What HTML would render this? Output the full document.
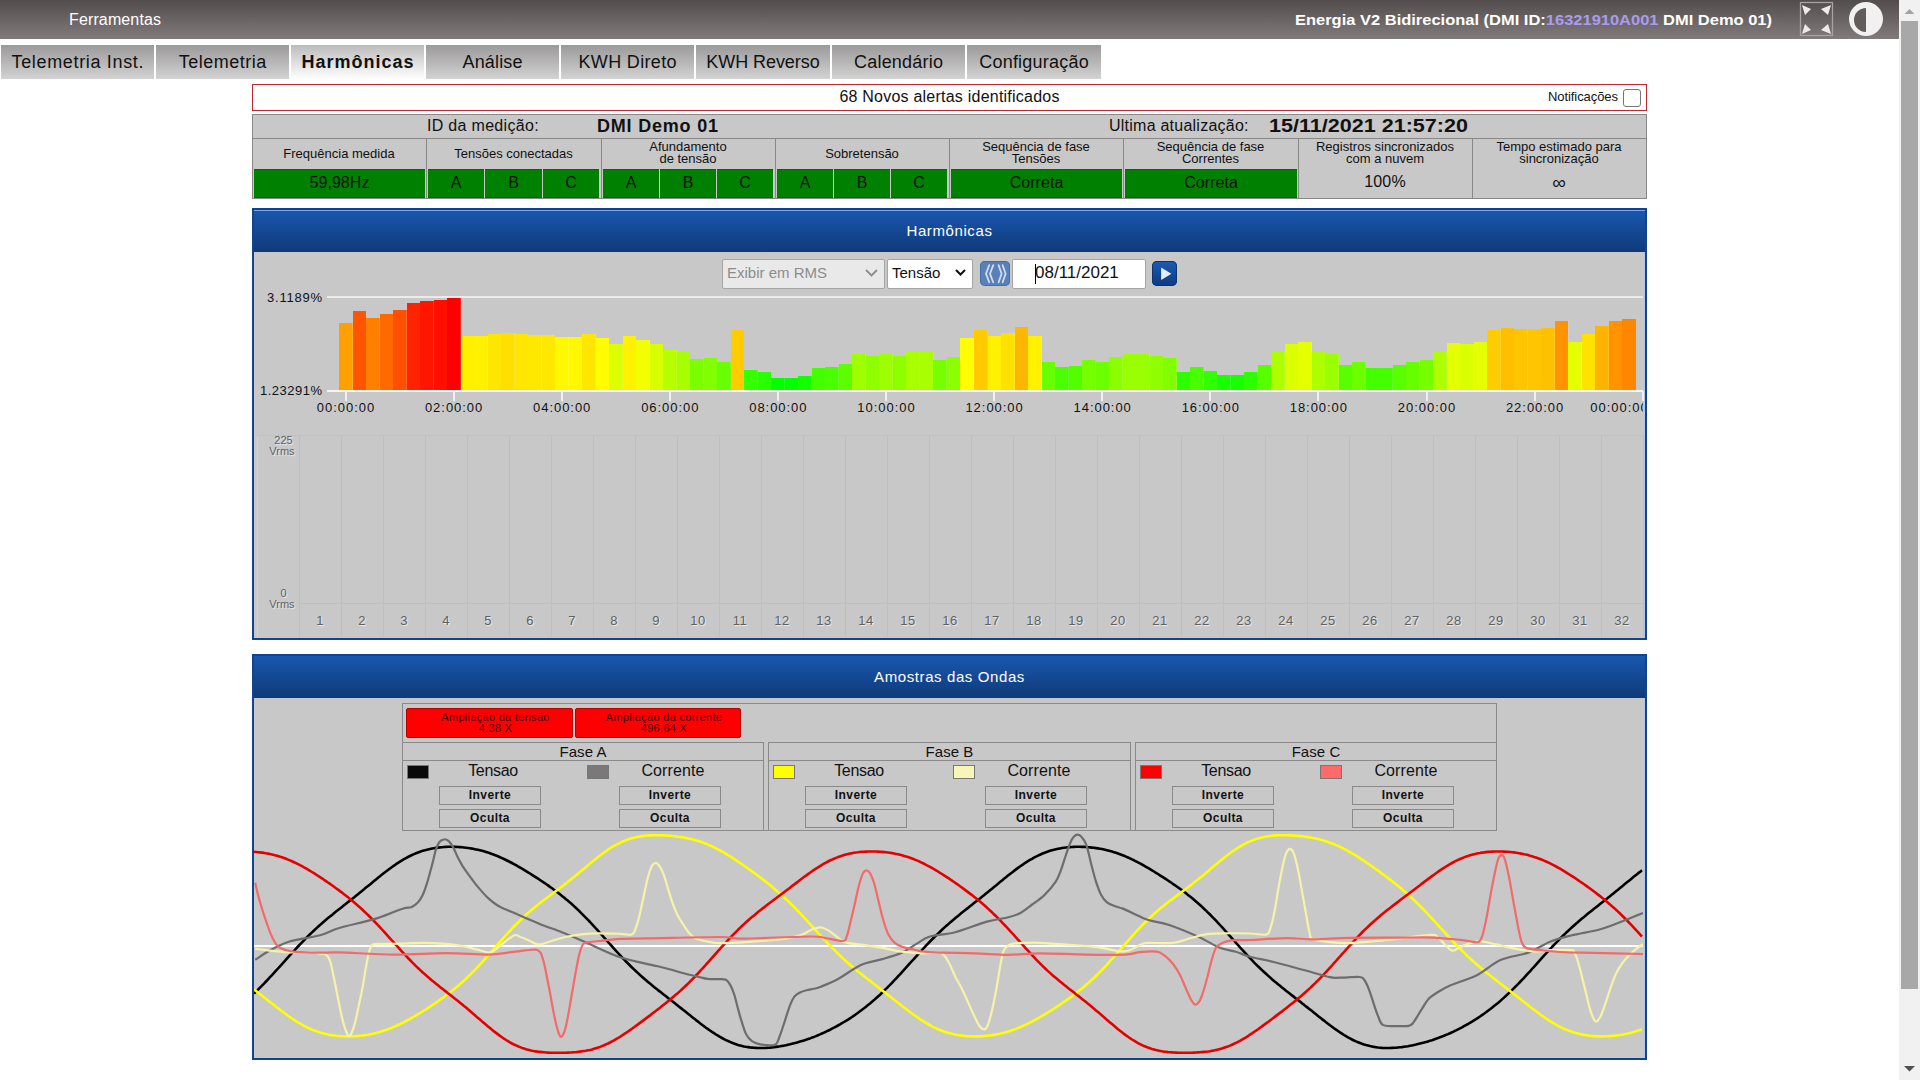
<!DOCTYPE html><html><head><meta charset='utf-8'><style>
*{box-sizing:border-box}
html,body{margin:0;padding:0;width:1920px;height:1080px;overflow:hidden;background:#fff;font-family:"Liberation Sans", sans-serif;color:#111}
.a{position:absolute;white-space:nowrap}
.hdr{left:0;top:0;width:1899px;height:39px;background:linear-gradient(#524c4c,#817c7b)}
.tab{top:45px;height:34px;background:linear-gradient(#9b9999,#d3d3d3);font-size:18px;line-height:35px;text-align:center;color:#111}
.tab.act{background:linear-gradient(#bbbbbb,#ffffff);font-weight:bold}
.cell{background:#c8c8c8;border-left:1px solid #888;text-align:center}
.g{background:#008000;text-align:center;color:#111}
.ph{background:linear-gradient(#1957b0,#0f3a78);color:#fff;text-align:center;font-size:15px}
</style></head><body>
<div class='a hdr'></div>
<div class='a' style='left:69px;top:11px;font-size:16px;color:#fff;letter-spacing:0.13px'>Ferramentas</div>
<div class='a' style='left:1295px;top:12px;font-size:14px;font-weight:bold;color:#fff;transform:scaleX(1.1767);transform-origin:0 0'>Energia V2 Bidirecional (DMI ID:<span style='color:#a99bf0'>16321910A001</span> DMI Demo 01)</div>
<svg class='a' style='left:1799px;top:1px' width='36' height='36' viewBox='0 0 36 36'>
<rect x='1.5' y='1.5' width='32' height='33' fill='none' stroke='#a8a2a0' stroke-width='1.3'/>
<path d='M3 4 L12 8 L6 14 Z M32 4 L22 8 L29 14 Z M3 33 L12 29 L6 23 Z M32 33 L22 29 L29 23 Z' fill='#eeeaea'/>
</svg>
<svg class='a' style='left:1848px;top:1px' width='36' height='36' viewBox='0 0 36 36'>
<circle cx='18' cy='18' r='17' fill='#f2f0f0'/>
<path d='M18 7 A11.5 11.5 0 0 0 18 31 Z' fill='#625c5b'/>
</svg>
<div class='a' style='left:1899px;top:0;width:21px;height:1080px;background:#f1f1f1'></div>
<div class='a' style='left:1901px;top:21px;width:17px;height:968px;background:#a8a8a8'></div>
<svg class='a' style='left:1899px;top:0' width='21' height='1080'><path d='M5.5 14 L10.5 9 L15.5 14 Z' fill='#a3a3a3'/><path d='M5 1066 L10.5 1071.5 L16 1066 Z' fill='#505050'/></svg>
<div class='a tab' style='left:1px;width:153px;letter-spacing:0.664px;text-indent:0.664px'>Telemetria Inst.</div>
<div class='a tab' style='left:156px;width:133px;letter-spacing:0.519px;text-indent:0.519px'>Telemetria</div>
<div class='a tab act' style='left:291px;width:133px;letter-spacing:0.995px;text-indent:0.995px'>Harmônicas</div>
<div class='a tab' style='left:426px;width:133px;letter-spacing:0.159px;text-indent:0.159px'>Análise</div>
<div class='a tab' style='left:561px;width:133px;letter-spacing:0.332px;text-indent:0.332px'>KWH Direto</div>
<div class='a tab' style='left:696px;width:134px;letter-spacing:-0.073px;text-indent:-0.073px'>KWH Reverso</div>
<div class='a tab' style='left:832px;width:133px;letter-spacing:0.215px;text-indent:0.215px'>Calendário</div>
<div class='a tab' style='left:967px;width:134px;letter-spacing:0.238px;text-indent:0.238px'>Configuração</div>
<div class='a' style='left:252px;top:84px;width:1395px;height:27px;border:1px solid #c0282d;background:#fff'></div>
<div class='a' style='left:252px;top:88px;width:1395px;text-align:center;font-size:16px;letter-spacing:0.226px'>68 Novos alertas identificados</div>
<div class='a' style='left:1548px;top:89px;font-size:13px;letter-spacing:-0.074px'>Notificações</div>
<div class='a' style='left:1623px;top:89px;width:18px;height:18px;border:1px solid #767676;border-radius:3px;background:#fff'></div>
<div class='a' style='left:252px;top:114px;width:1395px;height:85px;background:#c8c8c8;border:1px solid #888'></div>
<div class='a' style='left:253px;top:138px;width:1393px;height:1px;background:#888'></div>
<div class='a' style='left:427px;top:117px;font-size:16px;letter-spacing:0.307px'>ID da medição:</div>
<div class='a' style='left:597px;top:116px;font-size:18px;font-weight:bold;letter-spacing:0.797px'>DMI Demo 01</div>
<div class='a' style='left:1109px;top:117px;font-size:16px;letter-spacing:0.24px'>Ultima atualização:</div>
<div class='a' style='left:1269px;top:116px;font-size:18px;font-weight:bold;transform:scaleX(1.1977);transform-origin:0 0'>15/11/2021 21:57:20</div>
<div class='a' style='left:252px;top:146px;width:174px;text-align:center;font-size:13px;letter-spacing:0px'>Frequência medida</div>
<div class='a' style='left:426px;top:139px;width:1px;height:59px;background:#888'></div>
<div class='a' style='left:426px;top:146px;width:175px;text-align:center;font-size:13px;letter-spacing:0px'>Tensões conectadas</div>
<div class='a' style='left:601px;top:139px;width:1px;height:59px;background:#888'></div>
<div class='a' style='left:601px;top:141px;width:174px;text-align:center;font-size:13px;line-height:12px;letter-spacing:0px'>Afundamento<br>de tensão</div>
<div class='a' style='left:775px;top:139px;width:1px;height:59px;background:#888'></div>
<div class='a' style='left:775px;top:146px;width:174px;text-align:center;font-size:13px;letter-spacing:0px'>Sobretensão</div>
<div class='a' style='left:949px;top:139px;width:1px;height:59px;background:#888'></div>
<div class='a' style='left:949px;top:141px;width:174px;text-align:center;font-size:13px;line-height:12px;letter-spacing:0px'>Sequência de fase<br>Tensões</div>
<div class='a' style='left:1123px;top:139px;width:1px;height:59px;background:#888'></div>
<div class='a' style='left:1123px;top:141px;width:175px;text-align:center;font-size:13px;line-height:12px;letter-spacing:0px'>Sequência de fase<br>Correntes</div>
<div class='a' style='left:1298px;top:139px;width:1px;height:59px;background:#888'></div>
<div class='a' style='left:1298px;top:141px;width:174px;text-align:center;font-size:13px;line-height:12px;letter-spacing:0px'>Registros sincronizados<br>com a nuvem</div>
<div class='a' style='left:1472px;top:139px;width:1px;height:59px;background:#888'></div>
<div class='a' style='left:1472px;top:141px;width:174px;text-align:center;font-size:13px;line-height:12px;letter-spacing:0px'>Tempo estimado para<br>sincronização</div>
<div class='a g' style='left:254px;top:169px;width:171px;height:29px;font-size:16px;line-height:27px;letter-spacing:0.05px;box-shadow:inset 0 1px 0 #006a00,inset 0 -1px 0 #006a00'>59,98Hz</div>
<div class='a g' style='left:428px;top:169px;width:56px;height:29px;font-size:16px;line-height:27px;letter-spacing:0.05px;box-shadow:inset 0 1px 0 #006a00,inset 0 -1px 0 #006a00'>A</div>
<div class='a g' style='left:485px;top:169px;width:57px;height:29px;font-size:16px;line-height:27px;letter-spacing:0.05px;box-shadow:inset 0 1px 0 #006a00,inset 0 -1px 0 #006a00'>B</div>
<div class='a g' style='left:543px;top:169px;width:56px;height:29px;font-size:16px;line-height:27px;letter-spacing:0.05px;box-shadow:inset 0 1px 0 #006a00,inset 0 -1px 0 #006a00'>C</div>
<div class='a g' style='left:603px;top:169px;width:56px;height:29px;font-size:16px;line-height:27px;letter-spacing:0.05px;box-shadow:inset 0 1px 0 #006a00,inset 0 -1px 0 #006a00'>A</div>
<div class='a g' style='left:660px;top:169px;width:56px;height:29px;font-size:16px;line-height:27px;letter-spacing:0.05px;box-shadow:inset 0 1px 0 #006a00,inset 0 -1px 0 #006a00'>B</div>
<div class='a g' style='left:717px;top:169px;width:56px;height:29px;font-size:16px;line-height:27px;letter-spacing:0.05px;box-shadow:inset 0 1px 0 #006a00,inset 0 -1px 0 #006a00'>C</div>
<div class='a g' style='left:777px;top:169px;width:56px;height:29px;font-size:16px;line-height:27px;letter-spacing:0.05px;box-shadow:inset 0 1px 0 #006a00,inset 0 -1px 0 #006a00'>A</div>
<div class='a g' style='left:834px;top:169px;width:56px;height:29px;font-size:16px;line-height:27px;letter-spacing:0.05px;box-shadow:inset 0 1px 0 #006a00,inset 0 -1px 0 #006a00'>B</div>
<div class='a g' style='left:891px;top:169px;width:56px;height:29px;font-size:16px;line-height:27px;letter-spacing:0.05px;box-shadow:inset 0 1px 0 #006a00,inset 0 -1px 0 #006a00'>C</div>
<div class='a g' style='left:951px;top:169px;width:171px;height:29px;font-size:16px;line-height:27px;letter-spacing:0.05px;box-shadow:inset 0 1px 0 #006a00,inset 0 -1px 0 #006a00'>Correta</div>
<div class='a g' style='left:1125px;top:169px;width:172px;height:29px;font-size:16px;line-height:27px;letter-spacing:0.05px;box-shadow:inset 0 1px 0 #006a00,inset 0 -1px 0 #006a00'>Correta</div>
<div class='a' style='left:1298px;top:173px;width:174px;text-align:center;font-size:16px;letter-spacing:0.2px'>100%</div>
<div class='a' style='left:1472px;top:172px;width:174px;text-align:center;font-size:19px'>∞</div>
<div class='a' style='left:252px;top:208px;width:1395px;height:432px;background:#c8c8c8;border:2px solid #10448f'></div>
<div class='a ph' style='left:254px;top:210px;width:1391px;height:42px;line-height:42px;letter-spacing:0.6px'>Harmônicas</div>
<div class='a' style='left:1644px;top:252px;width:1px;height:386px;background:#b0c6e8'></div>
<div class='a' style='left:254px;top:210px;width:1391px;height:1px;background:#7aa6e6'></div>
<div class='a' style='left:722px;top:259px;width:163px;height:30px;background:#e9e9e9;border:1px solid #a5a5a5;border-radius:2px'></div>
<div class='a' style='left:727px;top:264px;font-size:15px;color:#8c8c8c'>Exibir em RMS</div>
<svg class='a' style='left:864px;top:268px' width='16' height='10'><path d='M2 2 L7.5 7.5 L13 2' fill='none' stroke='#8c8c8c' stroke-width='1.8'/></svg>
<div class='a' style='left:887px;top:259px;width:86px;height:30px;background:#fff;border:1px solid #a5a5a5;border-radius:2px'></div>
<div class='a' style='left:892px;top:264px;font-size:15px;color:#111'>Tensão</div>
<svg class='a' style='left:954px;top:268px' width='16' height='10'><path d='M2 2 L6.5 6.5 L11 2' fill='none' stroke='#111' stroke-width='2'/></svg>
<div class='a' style='left:980px;top:261px;width:30px;height:25px;background:#5a80b9;border-radius:5px;box-shadow:inset 0 0 0 1px #4a6ea4'></div>
<svg class='a' style='left:980px;top:261px' width='30' height='25'><path d='M9.2 4.2 L6 12.7 L9.2 21.2 M13.2 4.2 L10 12.7 L13.2 21.2 M18.6 4.2 L21.6 12.7 L18.6 21.2 M22.6 4.2 L25.6 12.7 L22.6 21.2' fill='none' stroke='#d2ddef' stroke-width='1.8' stroke-linecap='round'/></svg>
<div class='a' style='left:1012px;top:259px;width:134px;height:30px;background:#fff;border:1px solid #a5a5a5;border-radius:2px'></div>
<div class='a' style='left:1035px;top:263px;font-size:17px;color:#111'>08/11/2021</div>
<div class='a' style='left:1035px;top:264px;width:1px;height:20px;background:#000'></div>
<div class='a' style='left:1152px;top:261px;width:25px;height:25px;background:linear-gradient(#1a5cb5,#0e3a80);border-radius:5px;box-shadow:inset 0 0 0 1px #0d3470'></div>
<svg class='a' style='left:1152px;top:261px' width='25' height='25'><path d='M9.1 6.6 L19.4 12.7 L9.1 18.9 Z' fill='#e8edf6'/></svg>
<svg class='a' style='left:0;top:0' width='1920' height='1080' shape-rendering='crispEdges'><rect x='327' y='296' width='1316' height='2' fill='#ebebeb'/><rect x='339.00' y='323.1' width='13.51' height='67.9' fill='#ffa000'/><rect x='352.01' y='323.1' width='0.6' height='67.9' fill='#ffffff' fill-opacity='0.15'/><rect x='352.51' y='311.1' width='13.51' height='79.9' fill='#ff5500'/><rect x='365.52' y='311.1' width='0.6' height='79.9' fill='#ffffff' fill-opacity='0.15'/><rect x='366.02' y='317.9' width='13.51' height='73.1' fill='#ff8000'/><rect x='379.03' y='317.9' width='0.6' height='73.1' fill='#ffffff' fill-opacity='0.15'/><rect x='379.53' y='314.3' width='13.51' height='76.7' fill='#ff6900'/><rect x='392.54' y='314.3' width='0.6' height='76.7' fill='#ffffff' fill-opacity='0.15'/><rect x='393.04' y='310.1' width='13.51' height='80.9' fill='#ff4f00'/><rect x='406.05' y='310.1' width='0.6' height='80.9' fill='#ffffff' fill-opacity='0.15'/><rect x='406.55' y='303.2' width='13.51' height='87.8' fill='#ff2300'/><rect x='419.56' y='303.2' width='0.6' height='87.8' fill='#ffffff' fill-opacity='0.15'/><rect x='420.06' y='301.1' width='13.51' height='89.9' fill='#ff1600'/><rect x='433.07' y='301.1' width='0.6' height='89.9' fill='#ffffff' fill-opacity='0.15'/><rect x='433.57' y='300.0' width='13.51' height='91.0' fill='#ff0f00'/><rect x='446.58' y='300.0' width='0.6' height='91.0' fill='#ffffff' fill-opacity='0.15'/><rect x='447.08' y='297.6' width='13.51' height='93.4' fill='#ff0000'/><rect x='460.09' y='297.6' width='0.6' height='93.4' fill='#ffffff' fill-opacity='0.15'/><rect x='460.59' y='335.7' width='13.51' height='55.3' fill='#fff000'/><rect x='473.60' y='335.7' width='0.6' height='55.3' fill='#ffffff' fill-opacity='0.15'/><rect x='474.10' y='335.9' width='13.51' height='55.1' fill='#fff100'/><rect x='487.11' y='335.9' width='0.6' height='55.1' fill='#ffffff' fill-opacity='0.15'/><rect x='487.61' y='334.2' width='13.51' height='56.8' fill='#ffe600'/><rect x='500.62' y='334.2' width='0.6' height='56.8' fill='#ffffff' fill-opacity='0.15'/><rect x='501.12' y='333.0' width='13.51' height='58.0' fill='#ffdf00'/><rect x='514.14' y='333.0' width='0.6' height='58.0' fill='#ffffff' fill-opacity='0.15'/><rect x='514.64' y='334.2' width='13.51' height='56.8' fill='#ffe600'/><rect x='527.65' y='334.2' width='0.6' height='56.8' fill='#ffffff' fill-opacity='0.15'/><rect x='528.15' y='334.5' width='13.51' height='56.5' fill='#ffe800'/><rect x='541.16' y='334.5' width='0.6' height='56.5' fill='#ffffff' fill-opacity='0.15'/><rect x='541.66' y='334.5' width='13.51' height='56.5' fill='#ffe800'/><rect x='554.67' y='334.5' width='0.6' height='56.5' fill='#ffffff' fill-opacity='0.15'/><rect x='555.17' y='337.1' width='13.51' height='53.9' fill='#fff800'/><rect x='568.18' y='337.1' width='0.6' height='53.9' fill='#ffffff' fill-opacity='0.15'/><rect x='568.68' y='337.1' width='13.51' height='53.9' fill='#fff800'/><rect x='581.69' y='337.1' width='0.6' height='53.9' fill='#ffffff' fill-opacity='0.15'/><rect x='582.19' y='334.2' width='13.51' height='56.8' fill='#ffe600'/><rect x='595.20' y='334.2' width='0.6' height='56.8' fill='#ffffff' fill-opacity='0.15'/><rect x='595.70' y='337.8' width='13.51' height='53.2' fill='#fffd00'/><rect x='608.71' y='337.8' width='0.6' height='53.2' fill='#ffffff' fill-opacity='0.15'/><rect x='609.21' y='343.7' width='13.51' height='47.3' fill='#dcff00'/><rect x='622.22' y='343.7' width='0.6' height='47.3' fill='#ffffff' fill-opacity='0.15'/><rect x='622.72' y='335.9' width='13.51' height='55.1' fill='#fff100'/><rect x='635.73' y='335.9' width='0.6' height='55.1' fill='#ffffff' fill-opacity='0.15'/><rect x='636.23' y='340.1' width='13.51' height='50.9' fill='#f3ff00'/><rect x='649.24' y='340.1' width='0.6' height='50.9' fill='#ffffff' fill-opacity='0.15'/><rect x='649.74' y='344.4' width='13.51' height='46.6' fill='#d8ff00'/><rect x='662.75' y='344.4' width='0.6' height='46.6' fill='#ffffff' fill-opacity='0.15'/><rect x='663.25' y='350.1' width='13.51' height='40.9' fill='#b4ff00'/><rect x='676.26' y='350.1' width='0.6' height='40.9' fill='#ffffff' fill-opacity='0.15'/><rect x='676.76' y='352.0' width='13.51' height='39.0' fill='#a8ff00'/><rect x='689.77' y='352.0' width='0.6' height='39.0' fill='#ffffff' fill-opacity='0.15'/><rect x='690.27' y='359.2' width='13.51' height='31.8' fill='#7bff00'/><rect x='703.28' y='359.2' width='0.6' height='31.8' fill='#ffffff' fill-opacity='0.15'/><rect x='703.78' y='358.1' width='13.51' height='32.9' fill='#81ff00'/><rect x='716.79' y='358.1' width='0.6' height='32.9' fill='#ffffff' fill-opacity='0.15'/><rect x='717.29' y='362.1' width='13.51' height='28.9' fill='#68ff00'/><rect x='730.30' y='362.1' width='0.6' height='28.9' fill='#ffffff' fill-opacity='0.15'/><rect x='730.80' y='330.1' width='13.51' height='60.9' fill='#ffcc00'/><rect x='743.81' y='330.1' width='0.6' height='60.9' fill='#ffffff' fill-opacity='0.15'/><rect x='744.31' y='370.2' width='13.51' height='20.8' fill='#35ff00'/><rect x='757.32' y='370.2' width='0.6' height='20.8' fill='#ffffff' fill-opacity='0.15'/><rect x='757.82' y='372.4' width='13.51' height='18.6' fill='#28ff00'/><rect x='770.83' y='372.4' width='0.6' height='18.6' fill='#ffffff' fill-opacity='0.15'/><rect x='771.33' y='378.3' width='13.51' height='12.7' fill='#02ff00'/><rect x='784.34' y='378.3' width='0.6' height='12.7' fill='#ffffff' fill-opacity='0.15'/><rect x='784.84' y='378.2' width='13.51' height='12.8' fill='#03ff00'/><rect x='797.85' y='378.2' width='0.6' height='12.8' fill='#ffffff' fill-opacity='0.15'/><rect x='798.35' y='376.0' width='13.51' height='15.0' fill='#11ff00'/><rect x='811.36' y='376.0' width='0.6' height='15.0' fill='#ffffff' fill-opacity='0.15'/><rect x='811.86' y='368.0' width='13.51' height='23.0' fill='#43ff00'/><rect x='824.87' y='368.0' width='0.6' height='23.0' fill='#ffffff' fill-opacity='0.15'/><rect x='825.38' y='367.0' width='13.51' height='24.0' fill='#49ff00'/><rect x='838.39' y='367.0' width='0.6' height='24.0' fill='#ffffff' fill-opacity='0.15'/><rect x='838.89' y='363.9' width='13.51' height='27.1' fill='#5dff00'/><rect x='851.90' y='363.9' width='0.6' height='27.1' fill='#ffffff' fill-opacity='0.15'/><rect x='852.40' y='353.7' width='13.51' height='37.3' fill='#9dff00'/><rect x='865.41' y='353.7' width='0.6' height='37.3' fill='#ffffff' fill-opacity='0.15'/><rect x='865.91' y='355.9' width='13.51' height='35.1' fill='#8fff00'/><rect x='878.92' y='355.9' width='0.6' height='35.1' fill='#ffffff' fill-opacity='0.15'/><rect x='879.42' y='353.7' width='13.51' height='37.3' fill='#9dff00'/><rect x='892.43' y='353.7' width='0.6' height='37.3' fill='#ffffff' fill-opacity='0.15'/><rect x='892.93' y='355.9' width='13.51' height='35.1' fill='#8fff00'/><rect x='905.94' y='355.9' width='0.6' height='35.1' fill='#ffffff' fill-opacity='0.15'/><rect x='906.44' y='352.0' width='13.51' height='39.0' fill='#a8ff00'/><rect x='919.45' y='352.0' width='0.6' height='39.0' fill='#ffffff' fill-opacity='0.15'/><rect x='919.95' y='352.0' width='13.51' height='39.0' fill='#a8ff00'/><rect x='932.96' y='352.0' width='0.6' height='39.0' fill='#ffffff' fill-opacity='0.15'/><rect x='933.46' y='359.8' width='13.51' height='31.2' fill='#77ff00'/><rect x='946.47' y='359.8' width='0.6' height='31.2' fill='#ffffff' fill-opacity='0.15'/><rect x='946.97' y='356.6' width='13.51' height='34.4' fill='#8bff00'/><rect x='959.98' y='356.6' width='0.6' height='34.4' fill='#ffffff' fill-opacity='0.15'/><rect x='960.48' y='338.0' width='13.51' height='53.0' fill='#fffe00'/><rect x='973.49' y='338.0' width='0.6' height='53.0' fill='#ffffff' fill-opacity='0.15'/><rect x='973.99' y='329.9' width='13.51' height='61.1' fill='#ffcb00'/><rect x='987.00' y='329.9' width='0.6' height='61.1' fill='#ffffff' fill-opacity='0.15'/><rect x='987.50' y='335.9' width='13.51' height='55.1' fill='#fff100'/><rect x='1000.51' y='335.9' width='0.6' height='55.1' fill='#ffffff' fill-opacity='0.15'/><rect x='1001.01' y='333.3' width='13.51' height='57.7' fill='#ffe100'/><rect x='1014.02' y='333.3' width='0.6' height='57.7' fill='#ffffff' fill-opacity='0.15'/><rect x='1014.52' y='326.5' width='13.51' height='64.5' fill='#ffb600'/><rect x='1027.53' y='326.5' width='0.6' height='64.5' fill='#ffffff' fill-opacity='0.15'/><rect x='1028.03' y='335.9' width='13.51' height='55.1' fill='#fff100'/><rect x='1041.04' y='335.9' width='0.6' height='55.1' fill='#ffffff' fill-opacity='0.15'/><rect x='1041.54' y='362.1' width='13.51' height='28.9' fill='#68ff00'/><rect x='1054.55' y='362.1' width='0.6' height='28.9' fill='#ffffff' fill-opacity='0.15'/><rect x='1055.05' y='367.0' width='13.51' height='24.0' fill='#49ff00'/><rect x='1068.06' y='367.0' width='0.6' height='24.0' fill='#ffffff' fill-opacity='0.15'/><rect x='1068.56' y='365.8' width='13.51' height='25.2' fill='#51ff00'/><rect x='1081.57' y='365.8' width='0.6' height='25.2' fill='#ffffff' fill-opacity='0.15'/><rect x='1082.07' y='360.0' width='13.51' height='31.0' fill='#76ff00'/><rect x='1095.08' y='360.0' width='0.6' height='31.0' fill='#ffffff' fill-opacity='0.15'/><rect x='1095.58' y='361.5' width='13.51' height='29.5' fill='#6cff00'/><rect x='1108.59' y='361.5' width='0.6' height='29.5' fill='#ffffff' fill-opacity='0.15'/><rect x='1109.09' y='356.6' width='13.51' height='34.4' fill='#8bff00'/><rect x='1122.10' y='356.6' width='0.6' height='34.4' fill='#ffffff' fill-opacity='0.15'/><rect x='1122.60' y='354.2' width='13.51' height='36.8' fill='#9aff00'/><rect x='1135.61' y='354.2' width='0.6' height='36.8' fill='#ffffff' fill-opacity='0.15'/><rect x='1136.11' y='354.2' width='13.51' height='36.8' fill='#9aff00'/><rect x='1149.12' y='354.2' width='0.6' height='36.8' fill='#ffffff' fill-opacity='0.15'/><rect x='1149.62' y='355.9' width='13.51' height='35.1' fill='#8fff00'/><rect x='1162.64' y='355.9' width='0.6' height='35.1' fill='#ffffff' fill-opacity='0.15'/><rect x='1163.14' y='358.1' width='13.51' height='32.9' fill='#81ff00'/><rect x='1176.15' y='358.1' width='0.6' height='32.9' fill='#ffffff' fill-opacity='0.15'/><rect x='1176.65' y='371.5' width='13.51' height='19.5' fill='#2dff00'/><rect x='1189.66' y='371.5' width='0.6' height='19.5' fill='#ffffff' fill-opacity='0.15'/><rect x='1190.16' y='367.3' width='13.51' height='23.7' fill='#48ff00'/><rect x='1203.17' y='367.3' width='0.6' height='23.7' fill='#ffffff' fill-opacity='0.15'/><rect x='1203.67' y='371.2' width='13.51' height='19.8' fill='#2fff00'/><rect x='1216.68' y='371.2' width='0.6' height='19.8' fill='#ffffff' fill-opacity='0.15'/><rect x='1217.18' y='375.1' width='13.51' height='15.9' fill='#17ff00'/><rect x='1230.19' y='375.1' width='0.6' height='15.9' fill='#ffffff' fill-opacity='0.15'/><rect x='1230.69' y='375.1' width='13.51' height='15.9' fill='#17ff00'/><rect x='1243.70' y='375.1' width='0.6' height='15.9' fill='#ffffff' fill-opacity='0.15'/><rect x='1244.20' y='371.7' width='13.51' height='19.3' fill='#2cff00'/><rect x='1257.21' y='371.7' width='0.6' height='19.3' fill='#ffffff' fill-opacity='0.15'/><rect x='1257.71' y='364.7' width='13.51' height='26.3' fill='#58ff00'/><rect x='1270.72' y='364.7' width='0.6' height='26.3' fill='#ffffff' fill-opacity='0.15'/><rect x='1271.22' y='351.2' width='13.51' height='39.8' fill='#adff00'/><rect x='1284.23' y='351.2' width='0.6' height='39.8' fill='#ffffff' fill-opacity='0.15'/><rect x='1284.73' y='343.7' width='13.51' height='47.3' fill='#dcff00'/><rect x='1297.74' y='343.7' width='0.6' height='47.3' fill='#ffffff' fill-opacity='0.15'/><rect x='1298.24' y='342.3' width='13.51' height='48.7' fill='#e5ff00'/><rect x='1311.25' y='342.3' width='0.6' height='48.7' fill='#ffffff' fill-opacity='0.15'/><rect x='1311.75' y='351.1' width='13.51' height='39.9' fill='#adff00'/><rect x='1324.76' y='351.1' width='0.6' height='39.9' fill='#ffffff' fill-opacity='0.15'/><rect x='1325.26' y='354.2' width='13.51' height='36.8' fill='#9aff00'/><rect x='1338.27' y='354.2' width='0.6' height='36.8' fill='#ffffff' fill-opacity='0.15'/><rect x='1338.77' y='364.7' width='13.51' height='26.3' fill='#58ff00'/><rect x='1351.78' y='364.7' width='0.6' height='26.3' fill='#ffffff' fill-opacity='0.15'/><rect x='1352.28' y='361.5' width='13.51' height='29.5' fill='#6cff00'/><rect x='1365.29' y='361.5' width='0.6' height='29.5' fill='#ffffff' fill-opacity='0.15'/><rect x='1365.79' y='367.8' width='13.51' height='23.2' fill='#44ff00'/><rect x='1378.80' y='367.8' width='0.6' height='23.2' fill='#ffffff' fill-opacity='0.15'/><rect x='1379.30' y='367.8' width='13.51' height='23.2' fill='#44ff00'/><rect x='1392.31' y='367.8' width='0.6' height='23.2' fill='#ffffff' fill-opacity='0.15'/><rect x='1392.81' y='364.7' width='13.51' height='26.3' fill='#58ff00'/><rect x='1405.82' y='364.7' width='0.6' height='26.3' fill='#ffffff' fill-opacity='0.15'/><rect x='1406.32' y='362.4' width='13.51' height='28.6' fill='#66ff00'/><rect x='1419.33' y='362.4' width='0.6' height='28.6' fill='#ffffff' fill-opacity='0.15'/><rect x='1419.83' y='360.0' width='13.51' height='31.0' fill='#76ff00'/><rect x='1432.84' y='360.0' width='0.6' height='31.0' fill='#ffffff' fill-opacity='0.15'/><rect x='1433.34' y='351.2' width='13.51' height='39.8' fill='#adff00'/><rect x='1446.35' y='351.2' width='0.6' height='39.8' fill='#ffffff' fill-opacity='0.15'/><rect x='1446.85' y='342.5' width='13.51' height='48.5' fill='#e4ff00'/><rect x='1459.86' y='342.5' width='0.6' height='48.5' fill='#ffffff' fill-opacity='0.15'/><rect x='1460.36' y='344.2' width='13.51' height='46.8' fill='#d9ff00'/><rect x='1473.38' y='344.2' width='0.6' height='46.8' fill='#ffffff' fill-opacity='0.15'/><rect x='1473.88' y='342.3' width='13.51' height='48.7' fill='#e5ff00'/><rect x='1486.89' y='342.3' width='0.6' height='48.7' fill='#ffffff' fill-opacity='0.15'/><rect x='1487.39' y='330.0' width='13.51' height='61.0' fill='#ffcc00'/><rect x='1500.40' y='330.0' width='0.6' height='61.0' fill='#ffffff' fill-opacity='0.15'/><rect x='1500.90' y='327.9' width='13.51' height='63.1' fill='#ffbf00'/><rect x='1513.91' y='327.9' width='0.6' height='63.1' fill='#ffffff' fill-opacity='0.15'/><rect x='1514.41' y='328.9' width='13.51' height='62.1' fill='#ffc500'/><rect x='1527.42' y='328.9' width='0.6' height='62.1' fill='#ffffff' fill-opacity='0.15'/><rect x='1527.92' y='329.1' width='13.51' height='61.9' fill='#ffc600'/><rect x='1540.93' y='329.1' width='0.6' height='61.9' fill='#ffffff' fill-opacity='0.15'/><rect x='1541.43' y='328.1' width='13.51' height='62.9' fill='#ffc000'/><rect x='1554.44' y='328.1' width='0.6' height='62.9' fill='#ffffff' fill-opacity='0.15'/><rect x='1554.94' y='321.1' width='13.51' height='69.9' fill='#ff9400'/><rect x='1567.95' y='321.1' width='0.6' height='69.9' fill='#ffffff' fill-opacity='0.15'/><rect x='1568.45' y='342.3' width='13.51' height='48.7' fill='#e5ff00'/><rect x='1581.46' y='342.3' width='0.6' height='48.7' fill='#ffffff' fill-opacity='0.15'/><rect x='1581.96' y='333.5' width='13.51' height='57.5' fill='#ffe200'/><rect x='1594.97' y='333.5' width='0.6' height='57.5' fill='#ffffff' fill-opacity='0.15'/><rect x='1595.47' y='326.0' width='13.51' height='65.0' fill='#ffb300'/><rect x='1608.48' y='326.0' width='0.6' height='65.0' fill='#ffffff' fill-opacity='0.15'/><rect x='1608.98' y='321.1' width='13.51' height='69.9' fill='#ff9400'/><rect x='1621.99' y='321.1' width='0.6' height='69.9' fill='#ffffff' fill-opacity='0.15'/><rect x='1622.49' y='319.0' width='13.51' height='72.0' fill='#ff8700'/><rect x='1635.50' y='319.0' width='0.6' height='72.0' fill='#ffffff' fill-opacity='0.15'/><rect x='327' y='390' width='1316' height='2' fill='#f4f4f4'/><rect x='344.5' y='391' width='2' height='10' fill='#f0f0f0'/><rect x='452.6' y='391' width='2' height='10' fill='#f0f0f0'/><rect x='560.7' y='391' width='2' height='10' fill='#f0f0f0'/><rect x='668.8' y='391' width='2' height='10' fill='#f0f0f0'/><rect x='776.9' y='391' width='2' height='10' fill='#f0f0f0'/><rect x='885.0' y='391' width='2' height='10' fill='#f0f0f0'/><rect x='993.1' y='391' width='2' height='10' fill='#f0f0f0'/><rect x='1101.2' y='391' width='2' height='10' fill='#f0f0f0'/><rect x='1209.3' y='391' width='2' height='10' fill='#f0f0f0'/><rect x='1317.4' y='391' width='2' height='10' fill='#f0f0f0'/><rect x='1425.5' y='391' width='2' height='10' fill='#f0f0f0'/><rect x='1533.6' y='391' width='2' height='10' fill='#f0f0f0'/><rect x='1641.7' y='391' width='2' height='10' fill='#f0f0f0'/></svg>
<div class='a' style='left:267px;top:290px;font-size:13px;letter-spacing:0.773px'>3.1189%</div>
<div class='a' style='left:260px;top:383px;font-size:13px;letter-spacing:0.491px'>1.23291%</div>
<div class='a' style='left:254px;top:398px;width:1389px;height:20px;overflow:hidden'>
<div class='a' style='left:51.5px;top:2px;width:80px;text-align:center;font-size:13px;letter-spacing:0.956px;text-indent:0.956px'>00:00:00</div>
<div class='a' style='left:159.6px;top:2px;width:80px;text-align:center;font-size:13px;letter-spacing:0.956px;text-indent:0.956px'>02:00:00</div>
<div class='a' style='left:267.7px;top:2px;width:80px;text-align:center;font-size:13px;letter-spacing:0.956px;text-indent:0.956px'>04:00:00</div>
<div class='a' style='left:375.8px;top:2px;width:80px;text-align:center;font-size:13px;letter-spacing:0.956px;text-indent:0.956px'>06:00:00</div>
<div class='a' style='left:483.9px;top:2px;width:80px;text-align:center;font-size:13px;letter-spacing:0.956px;text-indent:0.956px'>08:00:00</div>
<div class='a' style='left:592.0px;top:2px;width:80px;text-align:center;font-size:13px;letter-spacing:0.956px;text-indent:0.956px'>10:00:00</div>
<div class='a' style='left:700.1px;top:2px;width:80px;text-align:center;font-size:13px;letter-spacing:0.956px;text-indent:0.956px'>12:00:00</div>
<div class='a' style='left:808.2px;top:2px;width:80px;text-align:center;font-size:13px;letter-spacing:0.956px;text-indent:0.956px'>14:00:00</div>
<div class='a' style='left:916.3px;top:2px;width:80px;text-align:center;font-size:13px;letter-spacing:0.956px;text-indent:0.956px'>16:00:00</div>
<div class='a' style='left:1024.4px;top:2px;width:80px;text-align:center;font-size:13px;letter-spacing:0.956px;text-indent:0.956px'>18:00:00</div>
<div class='a' style='left:1132.5px;top:2px;width:80px;text-align:center;font-size:13px;letter-spacing:0.956px;text-indent:0.956px'>20:00:00</div>
<div class='a' style='left:1240.6px;top:2px;width:80px;text-align:center;font-size:13px;letter-spacing:0.956px;text-indent:0.956px'>22:00:00</div>
<div class='a' style='left:1325.0px;top:2px;width:80px;text-align:center;font-size:13px;letter-spacing:0.956px;text-indent:0.956px'>00:00:00</div>
</div>
<svg class='a' style='left:0;top:0' width='1920' height='1080' shape-rendering='crispEdges'><rect x='257' y='435' width='42' height='202' fill='#c8c8c8'/><rect x='257' y='435' width='1' height='202' fill='#d2d2d2'/><rect x='257' y='435' width='1386' height='1' fill='#c2c2c2'/><rect x='299' y='435' width='1' height='202' fill='#bfbfbf'/><rect x='341' y='435' width='1' height='202' fill='#bfbfbf'/><rect x='383' y='435' width='1' height='202' fill='#bfbfbf'/><rect x='425' y='435' width='1' height='202' fill='#bfbfbf'/><rect x='467' y='435' width='1' height='202' fill='#bfbfbf'/><rect x='509' y='435' width='1' height='202' fill='#bfbfbf'/><rect x='551' y='435' width='1' height='202' fill='#bfbfbf'/><rect x='593' y='435' width='1' height='202' fill='#bfbfbf'/><rect x='635' y='435' width='1' height='202' fill='#bfbfbf'/><rect x='677' y='435' width='1' height='202' fill='#bfbfbf'/><rect x='719' y='435' width='1' height='202' fill='#bfbfbf'/><rect x='761' y='435' width='1' height='202' fill='#bfbfbf'/><rect x='803' y='435' width='1' height='202' fill='#bfbfbf'/><rect x='845' y='435' width='1' height='202' fill='#bfbfbf'/><rect x='887' y='435' width='1' height='202' fill='#bfbfbf'/><rect x='929' y='435' width='1' height='202' fill='#bfbfbf'/><rect x='971' y='435' width='1' height='202' fill='#bfbfbf'/><rect x='1013' y='435' width='1' height='202' fill='#bfbfbf'/><rect x='1055' y='435' width='1' height='202' fill='#bfbfbf'/><rect x='1097' y='435' width='1' height='202' fill='#bfbfbf'/><rect x='1139' y='435' width='1' height='202' fill='#bfbfbf'/><rect x='1181' y='435' width='1' height='202' fill='#bfbfbf'/><rect x='1223' y='435' width='1' height='202' fill='#bfbfbf'/><rect x='1265' y='435' width='1' height='202' fill='#bfbfbf'/><rect x='1307' y='435' width='1' height='202' fill='#bfbfbf'/><rect x='1349' y='435' width='1' height='202' fill='#bfbfbf'/><rect x='1391' y='435' width='1' height='202' fill='#bfbfbf'/><rect x='1433' y='435' width='1' height='202' fill='#bfbfbf'/><rect x='1475' y='435' width='1' height='202' fill='#bfbfbf'/><rect x='1517' y='435' width='1' height='202' fill='#bfbfbf'/><rect x='1559' y='435' width='1' height='202' fill='#bfbfbf'/><rect x='1601' y='435' width='1' height='202' fill='#bfbfbf'/><rect x='1643' y='435' width='1' height='202' fill='#bfbfbf'/><rect x='299' y='603' width='1344' height='1' fill='#bfbfbf'/></svg>
<div class='a' style='left:261px;top:435px;width:42px;text-align:center;font-size:11px;line-height:11px;color:#606060;text-shadow:1px 1px 1px #f0f0f0'>&nbsp;225<br>Vrms</div>
<div class='a' style='left:261px;top:588px;width:42px;text-align:center;font-size:11px;line-height:11px;color:#606060;text-shadow:1px 1px 1px #f0f0f0'>&nbsp;0<br>Vrms</div>
<div class='a' style='left:299px;top:613px;width:42px;text-align:center;font-size:13px;color:#606060;letter-spacing:0.5px;text-shadow:1px 1px 1px #f0f0f0'>1</div>
<div class='a' style='left:341px;top:613px;width:42px;text-align:center;font-size:13px;color:#606060;letter-spacing:0.5px;text-shadow:1px 1px 1px #f0f0f0'>2</div>
<div class='a' style='left:383px;top:613px;width:42px;text-align:center;font-size:13px;color:#606060;letter-spacing:0.5px;text-shadow:1px 1px 1px #f0f0f0'>3</div>
<div class='a' style='left:425px;top:613px;width:42px;text-align:center;font-size:13px;color:#606060;letter-spacing:0.5px;text-shadow:1px 1px 1px #f0f0f0'>4</div>
<div class='a' style='left:467px;top:613px;width:42px;text-align:center;font-size:13px;color:#606060;letter-spacing:0.5px;text-shadow:1px 1px 1px #f0f0f0'>5</div>
<div class='a' style='left:509px;top:613px;width:42px;text-align:center;font-size:13px;color:#606060;letter-spacing:0.5px;text-shadow:1px 1px 1px #f0f0f0'>6</div>
<div class='a' style='left:551px;top:613px;width:42px;text-align:center;font-size:13px;color:#606060;letter-spacing:0.5px;text-shadow:1px 1px 1px #f0f0f0'>7</div>
<div class='a' style='left:593px;top:613px;width:42px;text-align:center;font-size:13px;color:#606060;letter-spacing:0.5px;text-shadow:1px 1px 1px #f0f0f0'>8</div>
<div class='a' style='left:635px;top:613px;width:42px;text-align:center;font-size:13px;color:#606060;letter-spacing:0.5px;text-shadow:1px 1px 1px #f0f0f0'>9</div>
<div class='a' style='left:677px;top:613px;width:42px;text-align:center;font-size:13px;color:#606060;letter-spacing:0.5px;text-shadow:1px 1px 1px #f0f0f0'>10</div>
<div class='a' style='left:719px;top:613px;width:42px;text-align:center;font-size:13px;color:#606060;letter-spacing:0.5px;text-shadow:1px 1px 1px #f0f0f0'>11</div>
<div class='a' style='left:761px;top:613px;width:42px;text-align:center;font-size:13px;color:#606060;letter-spacing:0.5px;text-shadow:1px 1px 1px #f0f0f0'>12</div>
<div class='a' style='left:803px;top:613px;width:42px;text-align:center;font-size:13px;color:#606060;letter-spacing:0.5px;text-shadow:1px 1px 1px #f0f0f0'>13</div>
<div class='a' style='left:845px;top:613px;width:42px;text-align:center;font-size:13px;color:#606060;letter-spacing:0.5px;text-shadow:1px 1px 1px #f0f0f0'>14</div>
<div class='a' style='left:887px;top:613px;width:42px;text-align:center;font-size:13px;color:#606060;letter-spacing:0.5px;text-shadow:1px 1px 1px #f0f0f0'>15</div>
<div class='a' style='left:929px;top:613px;width:42px;text-align:center;font-size:13px;color:#606060;letter-spacing:0.5px;text-shadow:1px 1px 1px #f0f0f0'>16</div>
<div class='a' style='left:971px;top:613px;width:42px;text-align:center;font-size:13px;color:#606060;letter-spacing:0.5px;text-shadow:1px 1px 1px #f0f0f0'>17</div>
<div class='a' style='left:1013px;top:613px;width:42px;text-align:center;font-size:13px;color:#606060;letter-spacing:0.5px;text-shadow:1px 1px 1px #f0f0f0'>18</div>
<div class='a' style='left:1055px;top:613px;width:42px;text-align:center;font-size:13px;color:#606060;letter-spacing:0.5px;text-shadow:1px 1px 1px #f0f0f0'>19</div>
<div class='a' style='left:1097px;top:613px;width:42px;text-align:center;font-size:13px;color:#606060;letter-spacing:0.5px;text-shadow:1px 1px 1px #f0f0f0'>20</div>
<div class='a' style='left:1139px;top:613px;width:42px;text-align:center;font-size:13px;color:#606060;letter-spacing:0.5px;text-shadow:1px 1px 1px #f0f0f0'>21</div>
<div class='a' style='left:1181px;top:613px;width:42px;text-align:center;font-size:13px;color:#606060;letter-spacing:0.5px;text-shadow:1px 1px 1px #f0f0f0'>22</div>
<div class='a' style='left:1223px;top:613px;width:42px;text-align:center;font-size:13px;color:#606060;letter-spacing:0.5px;text-shadow:1px 1px 1px #f0f0f0'>23</div>
<div class='a' style='left:1265px;top:613px;width:42px;text-align:center;font-size:13px;color:#606060;letter-spacing:0.5px;text-shadow:1px 1px 1px #f0f0f0'>24</div>
<div class='a' style='left:1307px;top:613px;width:42px;text-align:center;font-size:13px;color:#606060;letter-spacing:0.5px;text-shadow:1px 1px 1px #f0f0f0'>25</div>
<div class='a' style='left:1349px;top:613px;width:42px;text-align:center;font-size:13px;color:#606060;letter-spacing:0.5px;text-shadow:1px 1px 1px #f0f0f0'>26</div>
<div class='a' style='left:1391px;top:613px;width:42px;text-align:center;font-size:13px;color:#606060;letter-spacing:0.5px;text-shadow:1px 1px 1px #f0f0f0'>27</div>
<div class='a' style='left:1433px;top:613px;width:42px;text-align:center;font-size:13px;color:#606060;letter-spacing:0.5px;text-shadow:1px 1px 1px #f0f0f0'>28</div>
<div class='a' style='left:1475px;top:613px;width:42px;text-align:center;font-size:13px;color:#606060;letter-spacing:0.5px;text-shadow:1px 1px 1px #f0f0f0'>29</div>
<div class='a' style='left:1517px;top:613px;width:42px;text-align:center;font-size:13px;color:#606060;letter-spacing:0.5px;text-shadow:1px 1px 1px #f0f0f0'>30</div>
<div class='a' style='left:1559px;top:613px;width:42px;text-align:center;font-size:13px;color:#606060;letter-spacing:0.5px;text-shadow:1px 1px 1px #f0f0f0'>31</div>
<div class='a' style='left:1601px;top:613px;width:42px;text-align:center;font-size:13px;color:#606060;letter-spacing:0.5px;text-shadow:1px 1px 1px #f0f0f0'>32</div>
<div class='a' style='left:252px;top:654px;width:1395px;height:406px;background:#c8c8c8;border:2px solid #10448f'></div>
<div class='a ph' style='left:254px;top:656px;width:1391px;height:42px;line-height:42px;letter-spacing:0.6px'>Amostras das Ondas</div>
<div class='a' style='left:1644px;top:698px;width:1px;height:360px;background:#b0c6e8'></div>
<div class='a' style='left:402px;top:703px;width:1095px;height:128px;border:1px solid #8a8a8a'></div>
<div class='a' style='left:406px;top:708px;width:167px;height:30px;background:#ff0000;border:1px solid #b80000;border-radius:2px;text-align:center;font-size:11px;line-height:11px;color:#4a0000;padding-top:3px;padding-left:12px;letter-spacing:0.3px'>Ampliação da tensão<br>4.38 X</div>
<div class='a' style='left:575px;top:708px;width:166px;height:30px;background:#ff0000;border:1px solid #b80000;border-radius:2px;text-align:center;font-size:11px;line-height:11px;color:#4a0000;padding-top:3px;padding-left:12px;letter-spacing:0.3px'>Ampliação da corrente<br>496.64 X</div>
<div class='a' style='left:402px;top:742px;width:362px;height:89px;border:1px solid #8a8a8a'></div>
<div class='a' style='left:402px;top:760px;width:362px;height:1px;background:#8a8a8a'></div>
<div class='a' style='left:402px;top:743px;width:362px;text-align:center;font-size:15px;line-height:17px;letter-spacing:0.059px'>Fase A</div>
<div class='a' style='left:407px;top:765px;width:22px;height:14px;background:#0a0a0a;border:1px solid #777'></div>
<div class='a' style='left:587px;top:765px;width:22px;height:14px;background:#7a7878;border:1px solid #777'></div>
<div class='a' style='left:443px;top:762px;width:100px;text-align:center;font-size:16px;line-height:17px;letter-spacing:-0.319px'>Tensao</div>
<div class='a' style='left:623px;top:762px;width:100px;text-align:center;font-size:16px;line-height:17px;letter-spacing:0.107px'>Corrente</div>
<div class='a' style='left:439px;top:786px;width:102px;height:19px;border:1px solid #8a8a8a;text-align:center;font-size:12px;line-height:17px;font-weight:bold;letter-spacing:0.44px'>Inverte</div>
<div class='a' style='left:439px;top:809px;width:102px;height:19px;border:1px solid #8a8a8a;text-align:center;font-size:12px;line-height:17px;font-weight:bold;letter-spacing:0.44px'>Oculta</div>
<div class='a' style='left:619px;top:786px;width:102px;height:19px;border:1px solid #8a8a8a;text-align:center;font-size:12px;line-height:17px;font-weight:bold;letter-spacing:0.44px'>Inverte</div>
<div class='a' style='left:619px;top:809px;width:102px;height:19px;border:1px solid #8a8a8a;text-align:center;font-size:12px;line-height:17px;font-weight:bold;letter-spacing:0.44px'>Oculta</div>
<div class='a' style='left:768px;top:742px;width:363px;height:89px;border:1px solid #8a8a8a'></div>
<div class='a' style='left:768px;top:760px;width:363px;height:1px;background:#8a8a8a'></div>
<div class='a' style='left:768px;top:743px;width:363px;text-align:center;font-size:15px;line-height:17px;letter-spacing:0.059px'>Fase B</div>
<div class='a' style='left:773px;top:765px;width:22px;height:14px;background:#ffff00;border:1px solid #777'></div>
<div class='a' style='left:953px;top:765px;width:22px;height:14px;background:#f8f5b8;border:1px solid #777'></div>
<div class='a' style='left:809px;top:762px;width:100px;text-align:center;font-size:16px;line-height:17px;letter-spacing:-0.319px'>Tensao</div>
<div class='a' style='left:989px;top:762px;width:100px;text-align:center;font-size:16px;line-height:17px;letter-spacing:0.107px'>Corrente</div>
<div class='a' style='left:805px;top:786px;width:102px;height:19px;border:1px solid #8a8a8a;text-align:center;font-size:12px;line-height:17px;font-weight:bold;letter-spacing:0.44px'>Inverte</div>
<div class='a' style='left:805px;top:809px;width:102px;height:19px;border:1px solid #8a8a8a;text-align:center;font-size:12px;line-height:17px;font-weight:bold;letter-spacing:0.44px'>Oculta</div>
<div class='a' style='left:985px;top:786px;width:102px;height:19px;border:1px solid #8a8a8a;text-align:center;font-size:12px;line-height:17px;font-weight:bold;letter-spacing:0.44px'>Inverte</div>
<div class='a' style='left:985px;top:809px;width:102px;height:19px;border:1px solid #8a8a8a;text-align:center;font-size:12px;line-height:17px;font-weight:bold;letter-spacing:0.44px'>Oculta</div>
<div class='a' style='left:1135px;top:742px;width:362px;height:89px;border:1px solid #8a8a8a'></div>
<div class='a' style='left:1135px;top:760px;width:362px;height:1px;background:#8a8a8a'></div>
<div class='a' style='left:1135px;top:743px;width:362px;text-align:center;font-size:15px;line-height:17px;letter-spacing:0.059px'>Fase C</div>
<div class='a' style='left:1140px;top:765px;width:22px;height:14px;background:#ff0000;border:1px solid #777'></div>
<div class='a' style='left:1320px;top:765px;width:22px;height:14px;background:#ff6b6b;border:1px solid #777'></div>
<div class='a' style='left:1176px;top:762px;width:100px;text-align:center;font-size:16px;line-height:17px;letter-spacing:-0.319px'>Tensao</div>
<div class='a' style='left:1356px;top:762px;width:100px;text-align:center;font-size:16px;line-height:17px;letter-spacing:0.107px'>Corrente</div>
<div class='a' style='left:1172px;top:786px;width:102px;height:19px;border:1px solid #8a8a8a;text-align:center;font-size:12px;line-height:17px;font-weight:bold;letter-spacing:0.44px'>Inverte</div>
<div class='a' style='left:1172px;top:809px;width:102px;height:19px;border:1px solid #8a8a8a;text-align:center;font-size:12px;line-height:17px;font-weight:bold;letter-spacing:0.44px'>Oculta</div>
<div class='a' style='left:1352px;top:786px;width:102px;height:19px;border:1px solid #8a8a8a;text-align:center;font-size:12px;line-height:17px;font-weight:bold;letter-spacing:0.44px'>Inverte</div>
<div class='a' style='left:1352px;top:809px;width:102px;height:19px;border:1px solid #8a8a8a;text-align:center;font-size:12px;line-height:17px;font-weight:bold;letter-spacing:0.44px'>Oculta</div>
<svg class='a' style='left:0;top:0' width='1920' height='1080'><defs><clipPath id='wc'><rect x='254' y='832' width='1389' height='226'/></clipPath></defs><g clip-path='url(#wc)'><rect x='254' y='945' width='1389' height='2' fill='#ffffff'/><path d='M254.0 993.5 L256.0 991.6 L258.0 989.6 L260.0 987.6 L262.0 985.6 L264.0 983.6 L266.0 981.5 L268.0 979.4 L270.0 977.2 L272.0 975.1 L274.0 972.9 L276.0 970.7 L278.0 968.5 L280.0 966.3 L282.0 964.1 L284.0 961.8 L286.0 959.6 L288.0 957.4 L290.0 955.2 L292.0 953.0 L294.0 950.8 L296.0 948.6 L298.0 946.5 L300.0 944.4 L302.0 942.3 L304.0 940.3 L306.0 938.2 L308.0 936.2 L310.0 934.3 L312.0 932.4 L314.0 930.5 L316.0 928.6 L318.0 926.8 L320.0 925.0 L322.0 923.3 L324.0 921.5 L326.0 919.8 L328.0 918.1 L330.0 916.5 L332.0 914.9 L334.0 913.2 L336.0 911.6 L338.0 910.0 L340.0 908.5 L342.0 906.9 L344.0 905.3 L346.0 903.7 L348.0 902.1 L350.0 900.6 L352.0 899.0 L354.0 897.4 L356.0 895.8 L358.0 894.2 L360.0 892.5 L362.0 890.9 L364.0 889.3 L366.0 887.6 L368.0 886.0 L370.0 884.4 L372.0 882.7 L374.0 881.1 L376.0 879.4 L378.0 877.8 L380.0 876.2 L382.0 874.6 L384.0 873.0 L386.0 871.5 L388.0 870.0 L390.0 868.5 L392.0 867.0 L394.0 865.6 L396.0 864.2 L398.0 862.9 L400.0 861.6 L402.0 860.4 L404.0 859.2 L406.0 858.1 L408.0 857.0 L410.0 856.0 L412.0 855.0 L414.0 854.1 L416.0 853.3 L418.0 852.5 L420.0 851.7 L422.0 851.1 L424.0 850.5 L426.0 849.9 L428.0 849.4 L430.0 848.9 L432.0 848.5 L434.0 848.2 L436.0 847.9 L438.0 847.6 L440.0 847.4 L442.0 847.2 L444.0 847.0 L446.0 846.9 L448.0 846.8 L450.0 846.8 L452.0 846.8 L454.0 846.8 L456.0 846.9 L458.0 847.0 L460.0 847.1 L462.0 847.3 L464.0 847.5 L466.0 847.7 L468.0 848.0 L470.0 848.3 L472.0 848.6 L474.0 849.0 L476.0 849.4 L478.0 849.8 L480.0 850.3 L482.0 850.8 L484.0 851.3 L486.0 851.9 L488.0 852.6 L490.0 853.2 L492.0 854.0 L494.0 854.7 L496.0 855.5 L498.0 856.3 L500.0 857.2 L502.0 858.1 L504.0 859.0 L506.0 860.0 L508.0 861.0 L510.0 862.0 L512.0 863.0 L514.0 864.1 L516.0 865.2 L518.0 866.4 L520.0 867.5 L522.0 868.7 L524.0 869.9 L526.0 871.1 L528.0 872.3 L530.0 873.5 L532.0 874.8 L534.0 876.1 L536.0 877.4 L538.0 878.7 L540.0 880.0 L542.0 881.3 L544.0 882.7 L546.0 884.0 L548.0 885.4 L550.0 886.9 L552.0 888.3 L554.0 889.8 L556.0 891.2 L558.0 892.8 L560.0 894.3 L562.0 895.9 L564.0 897.5 L566.0 899.2 L568.0 900.8 L570.0 902.6 L572.0 904.3 L574.0 906.1 L576.0 908.0 L578.0 909.9 L580.0 911.8 L582.0 913.8 L584.0 915.8 L586.0 917.8 L588.0 919.9 L590.0 922.0 L592.0 924.2 L594.0 926.3 L596.0 928.5 L598.0 930.7 L600.0 933.0 L602.0 935.2 L604.0 937.5 L606.0 939.7 L608.0 942.0 L610.0 944.2 L612.0 946.4 L614.0 948.6 L616.0 950.8 L618.0 953.0 L620.0 955.2 L622.0 957.3 L624.0 959.4 L626.0 961.5 L628.0 963.5 L630.0 965.5 L632.0 967.5 L634.0 969.4 L636.0 971.3 L638.0 973.1 L640.0 975.0 L642.0 976.7 L644.0 978.5 L646.0 980.2 L648.0 981.9 L650.0 983.6 L652.0 985.2 L654.0 986.9 L656.0 988.5 L658.0 990.1 L660.0 991.6 L662.0 993.2 L664.0 994.8 L666.0 996.3 L668.0 997.9 L670.0 999.5 L672.0 1001.0 L674.0 1002.6 L676.0 1004.2 L678.0 1005.8 L680.0 1007.4 L682.0 1008.9 L684.0 1010.5 L686.0 1012.1 L688.0 1013.7 L690.0 1015.3 L692.0 1016.9 L694.0 1018.5 L696.0 1020.1 L698.0 1021.6 L700.0 1023.2 L702.0 1024.7 L704.0 1026.2 L706.0 1027.7 L708.0 1029.1 L710.0 1030.5 L712.0 1031.9 L714.0 1033.2 L716.0 1034.5 L718.0 1035.7 L720.0 1036.9 L722.0 1038.0 L724.0 1039.1 L726.0 1040.1 L728.0 1041.0 L730.0 1041.9 L732.0 1042.8 L734.0 1043.5 L736.0 1044.2 L738.0 1044.9 L740.0 1045.4 L742.0 1045.9 L744.0 1046.4 L746.0 1046.8 L748.0 1047.1 L750.0 1047.4 L752.0 1047.6 L754.0 1047.8 L756.0 1047.9 L758.0 1048.0 L760.0 1048.0 L762.0 1048.0 L764.0 1048.0 L766.0 1047.9 L768.0 1047.7 L770.0 1047.6 L772.0 1047.4 L774.0 1047.2 L776.0 1046.9 L778.0 1046.6 L780.0 1046.3 L782.0 1045.9 L784.0 1045.6 L786.0 1045.2 L788.0 1044.7 L790.0 1044.3 L792.0 1043.8 L794.0 1043.3 L796.0 1042.8 L798.0 1042.2 L800.0 1041.6 L802.0 1041.0 L804.0 1040.4 L806.0 1039.8 L808.0 1039.1 L810.0 1038.4 L812.0 1037.6 L814.0 1036.9 L816.0 1036.1 L818.0 1035.2 L820.0 1034.4 L822.0 1033.5 L824.0 1032.6 L826.0 1031.7 L828.0 1030.7 L830.0 1029.8 L832.0 1028.7 L834.0 1027.7 L836.0 1026.6 L838.0 1025.5 L840.0 1024.4 L842.0 1023.2 L844.0 1022.0 L846.0 1020.8 L848.0 1019.6 L850.0 1018.3 L852.0 1017.0 L854.0 1015.6 L856.0 1014.2 L858.0 1012.8 L860.0 1011.3 L862.0 1009.8 L864.0 1008.3 L866.0 1006.7 L868.0 1005.1 L870.0 1003.5 L872.0 1001.8 L874.0 1000.1 L876.0 998.3 L878.0 996.5 L880.0 994.7 L882.0 992.8 L884.0 990.8 L886.0 988.9 L888.0 986.9 L890.0 984.9 L892.0 982.8 L894.0 980.7 L896.0 978.6 L898.0 976.4 L900.0 974.3 L902.0 972.1 L904.0 969.9 L906.0 967.7 L908.0 965.4 L910.0 963.2 L912.0 961.0 L914.0 958.8 L916.0 956.6 L918.0 954.4 L920.0 952.2 L922.0 950.0 L924.0 947.8 L926.0 945.7 L928.0 943.6 L930.0 941.5 L932.0 939.5 L934.0 937.5 L936.0 935.5 L938.0 933.6 L940.0 931.7 L942.0 929.8 L944.0 927.9 L946.0 926.1 L948.0 924.4 L950.0 922.6 L952.0 920.9 L954.0 919.2 L956.0 917.5 L958.0 915.9 L960.0 914.2 L962.0 912.6 L964.0 911.0 L966.0 909.4 L968.0 907.9 L970.0 906.3 L972.0 904.7 L974.0 903.1 L976.0 901.5 L978.0 900.0 L980.0 898.4 L982.0 896.8 L984.0 895.2 L986.0 893.5 L988.0 891.9 L990.0 890.3 L992.0 888.7 L994.0 887.0 L996.0 885.4 L998.0 883.7 L1000.0 882.1 L1002.0 880.5 L1004.0 878.8 L1006.0 877.2 L1008.0 875.6 L1010.0 874.0 L1012.0 872.5 L1014.0 870.9 L1016.0 869.4 L1018.0 867.9 L1020.0 866.5 L1022.0 865.1 L1024.0 863.7 L1026.0 862.4 L1028.0 861.1 L1030.0 859.9 L1032.0 858.8 L1034.0 857.6 L1036.0 856.6 L1038.0 855.6 L1040.0 854.7 L1042.0 853.8 L1044.0 853.0 L1046.0 852.2 L1048.0 851.5 L1050.0 850.8 L1052.0 850.2 L1054.0 849.7 L1056.0 849.2 L1058.0 848.8 L1060.0 848.4 L1062.0 848.0 L1064.0 847.7 L1066.0 847.5 L1068.0 847.3 L1070.0 847.1 L1072.0 847.0 L1074.0 846.9 L1076.0 846.8 L1078.0 846.8 L1080.0 846.8 L1082.0 846.9 L1084.0 846.9 L1086.0 847.0 L1088.0 847.2 L1090.0 847.4 L1092.0 847.6 L1094.0 847.8 L1096.0 848.1 L1098.0 848.4 L1100.0 848.7 L1102.0 849.1 L1104.0 849.5 L1106.0 850.0 L1108.0 850.5 L1110.0 851.0 L1112.0 851.6 L1114.0 852.2 L1116.0 852.8 L1118.0 853.5 L1120.0 854.2 L1122.0 855.0 L1124.0 855.8 L1126.0 856.6 L1128.0 857.5 L1130.0 858.4 L1132.0 859.4 L1134.0 860.3 L1136.0 861.3 L1138.0 862.4 L1140.0 863.4 L1142.0 864.5 L1144.0 865.6 L1146.0 866.8 L1148.0 867.9 L1150.0 869.1 L1152.0 870.3 L1154.0 871.5 L1156.0 872.8 L1158.0 874.0 L1160.0 875.3 L1162.0 876.6 L1164.0 877.9 L1166.0 879.2 L1168.0 880.5 L1170.0 881.8 L1172.0 883.2 L1174.0 884.6 L1176.0 886.0 L1178.0 887.4 L1180.0 888.8 L1182.0 890.3 L1184.0 891.8 L1186.0 893.3 L1188.0 894.9 L1190.0 896.5 L1192.0 898.1 L1194.0 899.8 L1196.0 901.5 L1198.0 903.2 L1200.0 905.0 L1202.0 906.8 L1204.0 908.7 L1206.0 910.6 L1208.0 912.6 L1210.0 914.5 L1212.0 916.6 L1214.0 918.6 L1216.0 920.7 L1218.0 922.8 L1220.0 925.0 L1222.0 927.2 L1224.0 929.4 L1226.0 931.6 L1228.0 933.8 L1230.0 936.1 L1232.0 938.3 L1234.0 940.5 L1236.0 942.8 L1238.0 945.0 L1240.0 947.3 L1242.0 949.5 L1244.0 951.7 L1246.0 953.8 L1248.0 956.0 L1250.0 958.1 L1252.0 960.2 L1254.0 962.3 L1256.0 964.3 L1258.0 966.3 L1260.0 968.2 L1262.0 970.1 L1264.0 972.0 L1266.0 973.8 L1268.0 975.6 L1270.0 977.4 L1272.0 979.2 L1274.0 980.9 L1276.0 982.5 L1278.0 984.2 L1280.0 985.8 L1282.0 987.5 L1284.0 989.1 L1286.0 990.7 L1288.0 992.2 L1290.0 993.8 L1292.0 995.4 L1294.0 996.9 L1296.0 998.5 L1298.0 1000.1 L1300.0 1001.6 L1302.0 1003.2 L1304.0 1004.8 L1306.0 1006.4 L1308.0 1007.9 L1310.0 1009.5 L1312.0 1011.1 L1314.0 1012.7 L1316.0 1014.3 L1318.0 1015.9 L1320.0 1017.5 L1322.0 1019.1 L1324.0 1020.6 L1326.0 1022.2 L1328.0 1023.7 L1330.0 1025.3 L1332.0 1026.7 L1334.0 1028.2 L1336.0 1029.6 L1338.0 1031.0 L1340.0 1032.4 L1342.0 1033.7 L1344.0 1035.0 L1346.0 1036.2 L1348.0 1037.3 L1350.0 1038.4 L1352.0 1039.5 L1354.0 1040.5 L1356.0 1041.4 L1358.0 1042.2 L1360.0 1043.0 L1362.0 1043.8 L1364.0 1044.5 L1366.0 1045.1 L1368.0 1045.6 L1370.0 1046.1 L1372.0 1046.5 L1374.0 1046.9 L1376.0 1047.2 L1378.0 1047.5 L1380.0 1047.7 L1382.0 1047.9 L1384.0 1048.0 L1386.0 1048.0 L1388.0 1048.0 L1390.0 1048.0 L1392.0 1047.9 L1394.0 1047.8 L1396.0 1047.7 L1398.0 1047.5 L1400.0 1047.3 L1402.0 1047.1 L1404.0 1046.8 L1406.0 1046.5 L1408.0 1046.2 L1410.0 1045.8 L1412.0 1045.4 L1414.0 1045.0 L1416.0 1044.6 L1418.0 1044.1 L1420.0 1043.6 L1422.0 1043.1 L1424.0 1042.6 L1426.0 1042.0 L1428.0 1041.4 L1430.0 1040.8 L1432.0 1040.2 L1434.0 1039.5 L1436.0 1038.8 L1438.0 1038.1 L1440.0 1037.3 L1442.0 1036.6 L1444.0 1035.8 L1446.0 1034.9 L1448.0 1034.1 L1450.0 1033.2 L1452.0 1032.3 L1454.0 1031.3 L1456.0 1030.4 L1458.0 1029.4 L1460.0 1028.3 L1462.0 1027.3 L1464.0 1026.2 L1466.0 1025.1 L1468.0 1024.0 L1470.0 1022.8 L1472.0 1021.6 L1474.0 1020.3 L1476.0 1019.1 L1478.0 1017.8 L1480.0 1016.5 L1482.0 1015.1 L1484.0 1013.7 L1486.0 1012.3 L1488.0 1010.8 L1490.0 1009.3 L1492.0 1007.7 L1494.0 1006.1 L1496.0 1004.5 L1498.0 1002.9 L1500.0 1001.2 L1502.0 999.4 L1504.0 997.6 L1506.0 995.8 L1508.0 993.9 L1510.0 992.0 L1512.0 990.1 L1514.0 988.1 L1516.0 986.1 L1518.0 984.1 L1520.0 982.0 L1522.0 979.9 L1524.0 977.8 L1526.0 975.6 L1528.0 973.4 L1530.0 971.3 L1532.0 969.0 L1534.0 966.8 L1536.0 964.6 L1538.0 962.4 L1540.0 960.2 L1542.0 957.9 L1544.0 955.7 L1546.0 953.5 L1548.0 951.3 L1550.0 949.2 L1552.0 947.0 L1554.0 944.9 L1556.0 942.8 L1558.0 940.8 L1560.0 938.7 L1562.0 936.7 L1564.0 934.8 L1566.0 932.8 L1568.0 931.0 L1570.0 929.1 L1572.0 927.3 L1574.0 925.5 L1576.0 923.7 L1578.0 922.0 L1580.0 920.3 L1582.0 918.6 L1584.0 916.9 L1586.0 915.3 L1588.0 913.6 L1590.0 912.0 L1592.0 910.4 L1594.0 908.8 L1596.0 907.3 L1598.0 905.7 L1600.0 904.1 L1602.0 902.5 L1604.0 900.9 L1606.0 899.4 L1608.0 897.8 L1610.0 896.2 L1612.0 894.6 L1614.0 892.9 L1616.0 891.3 L1618.0 889.7 L1620.0 888.1 L1622.0 886.4 L1624.0 884.8 L1626.0 883.1 L1628.0 881.5 L1630.0 879.9 L1632.0 878.2 L1634.0 876.6 L1636.0 875.0 L1638.0 873.4 L1640.0 871.9 L1642.0 870.3' fill='none' stroke='#000000' stroke-width='2.6' stroke-linejoin='round'/><path d='M254.0 989.4 L256.0 990.9 L258.0 992.5 L260.0 994.1 L262.0 995.6 L264.0 997.2 L266.0 998.8 L268.0 1000.4 L270.0 1002.0 L272.0 1003.5 L274.0 1005.1 L276.0 1006.7 L278.0 1008.2 L280.0 1009.8 L282.0 1011.3 L284.0 1012.8 L286.0 1014.3 L288.0 1015.7 L290.0 1017.1 L292.0 1018.5 L294.0 1019.8 L296.0 1021.1 L298.0 1022.4 L300.0 1023.5 L302.0 1024.7 L304.0 1025.8 L306.0 1026.8 L308.0 1027.8 L310.0 1028.7 L312.0 1029.6 L314.0 1030.4 L316.0 1031.1 L318.0 1031.8 L320.0 1032.5 L322.0 1033.1 L324.0 1033.6 L326.0 1034.1 L328.0 1034.5 L330.0 1034.9 L332.0 1035.2 L334.0 1035.5 L336.0 1035.8 L338.0 1036.0 L340.0 1036.1 L342.0 1036.3 L344.0 1036.3 L346.0 1036.4 L348.0 1036.4 L350.0 1036.4 L352.0 1036.3 L354.0 1036.3 L356.0 1036.1 L358.0 1036.0 L360.0 1035.8 L362.0 1035.6 L364.0 1035.3 L366.0 1035.0 L368.0 1034.7 L370.0 1034.3 L372.0 1033.9 L374.0 1033.5 L376.0 1033.0 L378.0 1032.5 L380.0 1031.9 L382.0 1031.3 L384.0 1030.6 L386.0 1030.0 L388.0 1029.2 L390.0 1028.5 L392.0 1027.7 L394.0 1026.8 L396.0 1026.0 L398.0 1025.0 L400.0 1024.1 L402.0 1023.1 L404.0 1022.1 L406.0 1021.0 L408.0 1020.0 L410.0 1018.9 L412.0 1017.7 L414.0 1016.6 L416.0 1015.4 L418.0 1014.2 L420.0 1013.0 L422.0 1011.8 L424.0 1010.5 L426.0 1009.3 L428.0 1008.0 L430.0 1006.7 L432.0 1005.3 L434.0 1004.0 L436.0 1002.6 L438.0 1001.3 L440.0 999.8 L442.0 998.4 L444.0 997.0 L446.0 995.5 L448.0 994.0 L450.0 992.4 L452.0 990.8 L454.0 989.2 L456.0 987.6 L458.0 985.9 L460.0 984.2 L462.0 982.4 L464.0 980.6 L466.0 978.7 L468.0 976.8 L470.0 974.9 L472.0 972.9 L474.0 970.8 L476.0 968.8 L478.0 966.6 L480.0 964.5 L482.0 962.3 L484.0 960.1 L486.0 957.9 L488.0 955.6 L490.0 953.4 L492.0 951.1 L494.0 948.8 L496.0 946.5 L498.0 944.2 L500.0 941.9 L502.0 939.6 L504.0 937.4 L506.0 935.2 L508.0 933.0 L510.0 930.8 L512.0 928.6 L514.0 926.5 L516.0 924.5 L518.0 922.5 L520.0 920.5 L522.0 918.6 L524.0 916.7 L526.0 914.8 L528.0 913.0 L530.0 911.3 L532.0 909.6 L534.0 907.9 L536.0 906.3 L538.0 904.7 L540.0 903.1 L542.0 901.5 L544.0 900.0 L546.0 898.5 L548.0 897.0 L550.0 895.5 L552.0 894.0 L554.0 892.5 L556.0 891.0 L558.0 889.5 L560.0 888.0 L562.0 886.5 L564.0 885.0 L566.0 883.4 L568.0 881.8 L570.0 880.2 L572.0 878.6 L574.0 877.0 L576.0 875.3 L578.0 873.7 L580.0 872.0 L582.0 870.3 L584.0 868.7 L586.0 867.0 L588.0 865.3 L590.0 863.6 L592.0 861.9 L594.0 860.3 L596.0 858.7 L598.0 857.1 L600.0 855.5 L602.0 854.0 L604.0 852.5 L606.0 851.1 L608.0 849.7 L610.0 848.4 L612.0 847.2 L614.0 846.0 L616.0 844.8 L618.0 843.8 L620.0 842.8 L622.0 841.8 L624.0 841.0 L626.0 840.2 L628.0 839.5 L630.0 838.8 L632.0 838.2 L634.0 837.7 L636.0 837.2 L638.0 836.8 L640.0 836.4 L642.0 836.1 L644.0 835.9 L646.0 835.7 L648.0 835.5 L650.0 835.4 L652.0 835.3 L654.0 835.2 L656.0 835.2 L658.0 835.2 L660.0 835.3 L662.0 835.3 L664.0 835.4 L666.0 835.5 L668.0 835.7 L670.0 835.8 L672.0 836.0 L674.0 836.2 L676.0 836.4 L678.0 836.7 L680.0 837.0 L682.0 837.3 L684.0 837.6 L686.0 838.0 L688.0 838.4 L690.0 838.8 L692.0 839.3 L694.0 839.8 L696.0 840.4 L698.0 841.0 L700.0 841.6 L702.0 842.3 L704.0 843.0 L706.0 843.8 L708.0 844.6 L710.0 845.5 L712.0 846.4 L714.0 847.4 L716.0 848.4 L718.0 849.4 L720.0 850.5 L722.0 851.6 L724.0 852.7 L726.0 853.9 L728.0 855.1 L730.0 856.3 L732.0 857.6 L734.0 858.9 L736.0 860.2 L738.0 861.6 L740.0 862.9 L742.0 864.3 L744.0 865.7 L746.0 867.1 L748.0 868.5 L750.0 869.9 L752.0 871.4 L754.0 872.8 L756.0 874.3 L758.0 875.8 L760.0 877.3 L762.0 878.8 L764.0 880.4 L766.0 881.9 L768.0 883.5 L770.0 885.1 L772.0 886.8 L774.0 888.5 L776.0 890.2 L778.0 891.9 L780.0 893.7 L782.0 895.5 L784.0 897.3 L786.0 899.2 L788.0 901.1 L790.0 903.0 L792.0 905.0 L794.0 907.0 L796.0 909.0 L798.0 911.1 L800.0 913.2 L802.0 915.3 L804.0 917.4 L806.0 919.6 L808.0 921.8 L810.0 924.0 L812.0 926.2 L814.0 928.4 L816.0 930.6 L818.0 932.8 L820.0 935.0 L822.0 937.1 L824.0 939.3 L826.0 941.4 L828.0 943.6 L830.0 945.6 L832.0 947.7 L834.0 949.7 L836.0 951.7 L838.0 953.7 L840.0 955.6 L842.0 957.5 L844.0 959.4 L846.0 961.2 L848.0 963.0 L850.0 964.7 L852.0 966.4 L854.0 968.1 L856.0 969.8 L858.0 971.4 L860.0 973.0 L862.0 974.6 L864.0 976.2 L866.0 977.8 L868.0 979.3 L870.0 980.9 L872.0 982.4 L874.0 984.0 L876.0 985.5 L878.0 987.1 L880.0 988.6 L882.0 990.2 L884.0 991.7 L886.0 993.3 L888.0 994.9 L890.0 996.4 L892.0 998.0 L894.0 999.6 L896.0 1001.2 L898.0 1002.8 L900.0 1004.3 L902.0 1005.9 L904.0 1007.5 L906.0 1009.0 L908.0 1010.5 L910.0 1012.1 L912.0 1013.5 L914.0 1015.0 L916.0 1016.4 L918.0 1017.8 L920.0 1019.2 L922.0 1020.5 L924.0 1021.7 L926.0 1023.0 L928.0 1024.1 L930.0 1025.2 L932.0 1026.3 L934.0 1027.3 L936.0 1028.3 L938.0 1029.2 L940.0 1030.0 L942.0 1030.8 L944.0 1031.5 L946.0 1032.2 L948.0 1032.8 L950.0 1033.3 L952.0 1033.8 L954.0 1034.3 L956.0 1034.7 L958.0 1035.1 L960.0 1035.4 L962.0 1035.6 L964.0 1035.9 L966.0 1036.1 L968.0 1036.2 L970.0 1036.3 L972.0 1036.4 L974.0 1036.4 L976.0 1036.4 L978.0 1036.4 L980.0 1036.3 L982.0 1036.2 L984.0 1036.1 L986.0 1035.9 L988.0 1035.7 L990.0 1035.4 L992.0 1035.2 L994.0 1034.9 L996.0 1034.5 L998.0 1034.1 L1000.0 1033.7 L1002.0 1033.2 L1004.0 1032.7 L1006.0 1032.2 L1008.0 1031.6 L1010.0 1031.0 L1012.0 1030.3 L1014.0 1029.6 L1016.0 1028.9 L1018.0 1028.1 L1020.0 1027.3 L1022.0 1026.4 L1024.0 1025.5 L1026.0 1024.6 L1028.0 1023.6 L1030.0 1022.6 L1032.0 1021.6 L1034.0 1020.5 L1036.0 1019.4 L1038.0 1018.3 L1040.0 1017.2 L1042.0 1016.0 L1044.0 1014.8 L1046.0 1013.6 L1048.0 1012.4 L1050.0 1011.2 L1052.0 1009.9 L1054.0 1008.6 L1056.0 1007.3 L1058.0 1006.0 L1060.0 1004.7 L1062.0 1003.3 L1064.0 1001.9 L1066.0 1000.6 L1068.0 999.1 L1070.0 997.7 L1072.0 996.2 L1074.0 994.7 L1076.0 993.2 L1078.0 991.6 L1080.0 990.0 L1082.0 988.4 L1084.0 986.7 L1086.0 985.0 L1088.0 983.3 L1090.0 981.5 L1092.0 979.6 L1094.0 977.8 L1096.0 975.8 L1098.0 973.9 L1100.0 971.9 L1102.0 969.8 L1104.0 967.7 L1106.0 965.6 L1108.0 963.4 L1110.0 961.2 L1112.0 959.0 L1114.0 956.8 L1116.0 954.5 L1118.0 952.2 L1120.0 949.9 L1122.0 947.6 L1124.0 945.3 L1126.0 943.1 L1128.0 940.8 L1130.0 938.5 L1132.0 936.3 L1134.0 934.1 L1136.0 931.9 L1138.0 929.7 L1140.0 927.6 L1142.0 925.5 L1144.0 923.5 L1146.0 921.5 L1148.0 919.5 L1150.0 917.6 L1152.0 915.7 L1154.0 913.9 L1156.0 912.2 L1158.0 910.4 L1160.0 908.7 L1162.0 907.1 L1164.0 905.5 L1166.0 903.9 L1168.0 902.3 L1170.0 900.8 L1172.0 899.2 L1174.0 897.7 L1176.0 896.2 L1178.0 894.8 L1180.0 893.3 L1182.0 891.8 L1184.0 890.3 L1186.0 888.8 L1188.0 887.3 L1190.0 885.7 L1192.0 884.2 L1194.0 882.6 L1196.0 881.0 L1198.0 879.4 L1200.0 877.8 L1202.0 876.2 L1204.0 874.5 L1206.0 872.9 L1208.0 871.2 L1210.0 869.5 L1212.0 867.8 L1214.0 866.1 L1216.0 864.4 L1218.0 862.8 L1220.0 861.1 L1222.0 859.5 L1224.0 857.9 L1226.0 856.3 L1228.0 854.8 L1230.0 853.3 L1232.0 851.8 L1234.0 850.4 L1236.0 849.1 L1238.0 847.8 L1240.0 846.5 L1242.0 845.4 L1244.0 844.3 L1246.0 843.2 L1248.0 842.3 L1250.0 841.4 L1252.0 840.6 L1254.0 839.8 L1256.0 839.1 L1258.0 838.5 L1260.0 837.9 L1262.0 837.4 L1264.0 837.0 L1266.0 836.6 L1268.0 836.3 L1270.0 836.0 L1272.0 835.8 L1274.0 835.6 L1276.0 835.4 L1278.0 835.3 L1280.0 835.3 L1282.0 835.2 L1284.0 835.2 L1286.0 835.2 L1288.0 835.3 L1290.0 835.4 L1292.0 835.5 L1294.0 835.6 L1296.0 835.7 L1298.0 835.9 L1300.0 836.1 L1302.0 836.3 L1304.0 836.5 L1306.0 836.8 L1308.0 837.1 L1310.0 837.4 L1312.0 837.8 L1314.0 838.2 L1316.0 838.6 L1318.0 839.1 L1320.0 839.5 L1322.0 840.1 L1324.0 840.7 L1326.0 841.3 L1328.0 842.0 L1330.0 842.7 L1332.0 843.4 L1334.0 844.2 L1336.0 845.1 L1338.0 845.9 L1340.0 846.9 L1342.0 847.8 L1344.0 848.9 L1346.0 849.9 L1348.0 851.0 L1350.0 852.1 L1352.0 853.3 L1354.0 854.5 L1356.0 855.7 L1358.0 857.0 L1360.0 858.3 L1362.0 859.6 L1364.0 860.9 L1366.0 862.2 L1368.0 863.6 L1370.0 865.0 L1372.0 866.4 L1374.0 867.8 L1376.0 869.2 L1378.0 870.6 L1380.0 872.1 L1382.0 873.6 L1384.0 875.0 L1386.0 876.5 L1388.0 878.1 L1390.0 879.6 L1392.0 881.1 L1394.0 882.7 L1396.0 884.3 L1398.0 886.0 L1400.0 887.6 L1402.0 889.3 L1404.0 891.0 L1406.0 892.8 L1408.0 894.5 L1410.0 896.4 L1412.0 898.2 L1414.0 900.1 L1416.0 902.0 L1418.0 904.0 L1420.0 906.0 L1422.0 908.0 L1424.0 910.0 L1426.0 912.1 L1428.0 914.2 L1430.0 916.4 L1432.0 918.5 L1434.0 920.7 L1436.0 922.9 L1438.0 925.1 L1440.0 927.3 L1442.0 929.5 L1444.0 931.7 L1446.0 933.9 L1448.0 936.1 L1450.0 938.2 L1452.0 940.4 L1454.0 942.5 L1456.0 944.6 L1458.0 946.7 L1460.0 948.7 L1462.0 950.7 L1464.0 952.7 L1466.0 954.7 L1468.0 956.6 L1470.0 958.4 L1472.0 960.3 L1474.0 962.1 L1476.0 963.9 L1478.0 965.6 L1480.0 967.3 L1482.0 969.0 L1484.0 970.6 L1486.0 972.2 L1488.0 973.8 L1490.0 975.4 L1492.0 977.0 L1494.0 978.6 L1496.0 980.1 L1498.0 981.7 L1500.0 983.2 L1502.0 984.8 L1504.0 986.3 L1506.0 987.8 L1508.0 989.4 L1510.0 990.9 L1512.0 992.5 L1514.0 994.1 L1516.0 995.6 L1518.0 997.2 L1520.0 998.8 L1522.0 1000.4 L1524.0 1002.0 L1526.0 1003.5 L1528.0 1005.1 L1530.0 1006.7 L1532.0 1008.2 L1534.0 1009.8 L1536.0 1011.3 L1538.0 1012.8 L1540.0 1014.3 L1542.0 1015.7 L1544.0 1017.1 L1546.0 1018.5 L1548.0 1019.8 L1550.0 1021.1 L1552.0 1022.4 L1554.0 1023.5 L1556.0 1024.7 L1558.0 1025.8 L1560.0 1026.8 L1562.0 1027.8 L1564.0 1028.7 L1566.0 1029.6 L1568.0 1030.4 L1570.0 1031.1 L1572.0 1031.8 L1574.0 1032.5 L1576.0 1033.1 L1578.0 1033.6 L1580.0 1034.1 L1582.0 1034.5 L1584.0 1034.9 L1586.0 1035.2 L1588.0 1035.5 L1590.0 1035.8 L1592.0 1036.0 L1594.0 1036.1 L1596.0 1036.3 L1598.0 1036.3 L1600.0 1036.4 L1602.0 1036.4 L1604.0 1036.4 L1606.0 1036.3 L1608.0 1036.3 L1610.0 1036.1 L1612.0 1036.0 L1614.0 1035.8 L1616.0 1035.6 L1618.0 1035.3 L1620.0 1035.0 L1622.0 1034.7 L1624.0 1034.3 L1626.0 1033.9 L1628.0 1033.5 L1630.0 1033.0 L1632.0 1032.5 L1634.0 1031.9 L1636.0 1031.3 L1638.0 1030.6 L1640.0 1030.0 L1642.0 1029.2' fill='none' stroke='#ffff00' stroke-width='2.6' stroke-linejoin='round'/><path d='M254.0 851.8 L256.0 852.0 L258.0 852.2 L260.0 852.4 L262.0 852.6 L264.0 852.9 L266.0 853.3 L268.0 853.6 L270.0 854.1 L272.0 854.5 L274.0 855.0 L276.0 855.5 L278.0 856.1 L280.0 856.7 L282.0 857.3 L284.0 858.0 L286.0 858.8 L288.0 859.6 L290.0 860.4 L292.0 861.3 L294.0 862.2 L296.0 863.1 L298.0 864.1 L300.0 865.2 L302.0 866.2 L304.0 867.3 L306.0 868.4 L308.0 869.6 L310.0 870.8 L312.0 872.0 L314.0 873.2 L316.0 874.5 L318.0 875.8 L320.0 877.1 L322.0 878.4 L324.0 879.8 L326.0 881.1 L328.0 882.5 L330.0 883.9 L332.0 885.3 L334.0 886.7 L336.0 888.2 L338.0 889.6 L340.0 891.1 L342.0 892.6 L344.0 894.2 L346.0 895.7 L348.0 897.3 L350.0 898.9 L352.0 900.6 L354.0 902.3 L356.0 904.0 L358.0 905.7 L360.0 907.5 L362.0 909.3 L364.0 911.2 L366.0 913.1 L368.0 915.0 L370.0 917.0 L372.0 919.0 L374.0 921.0 L376.0 923.1 L378.0 925.2 L380.0 927.3 L382.0 929.5 L384.0 931.7 L386.0 933.9 L388.0 936.1 L390.0 938.3 L392.0 940.5 L394.0 942.7 L396.0 945.0 L398.0 947.2 L400.0 949.4 L402.0 951.6 L404.0 953.7 L406.0 955.9 L408.0 958.0 L410.0 960.0 L412.0 962.1 L414.0 964.1 L416.0 966.1 L418.0 968.0 L420.0 969.9 L422.0 971.7 L424.0 973.6 L426.0 975.3 L428.0 977.1 L430.0 978.8 L432.0 980.5 L434.0 982.1 L436.0 983.7 L438.0 985.3 L440.0 986.9 L442.0 988.5 L444.0 990.1 L446.0 991.6 L448.0 993.2 L450.0 994.7 L452.0 996.3 L454.0 997.9 L456.0 999.5 L458.0 1001.1 L460.0 1002.7 L462.0 1004.3 L464.0 1006.0 L466.0 1007.6 L468.0 1009.3 L470.0 1011.0 L472.0 1012.7 L474.0 1014.4 L476.0 1016.2 L478.0 1017.9 L480.0 1019.6 L482.0 1021.4 L484.0 1023.1 L486.0 1024.8 L488.0 1026.5 L490.0 1028.1 L492.0 1029.8 L494.0 1031.4 L496.0 1032.9 L498.0 1034.4 L500.0 1035.9 L502.0 1037.3 L504.0 1038.7 L506.0 1040.0 L508.0 1041.2 L510.0 1042.4 L512.0 1043.5 L514.0 1044.5 L516.0 1045.4 L518.0 1046.3 L520.0 1047.1 L522.0 1047.9 L524.0 1048.6 L526.0 1049.2 L528.0 1049.7 L530.0 1050.2 L532.0 1050.7 L534.0 1051.1 L536.0 1051.4 L538.0 1051.7 L540.0 1051.9 L542.0 1052.1 L544.0 1052.3 L546.0 1052.5 L548.0 1052.6 L550.0 1052.7 L552.0 1052.7 L554.0 1052.8 L556.0 1052.8 L558.0 1052.8 L560.0 1052.8 L562.0 1052.8 L564.0 1052.7 L566.0 1052.7 L568.0 1052.6 L570.0 1052.5 L572.0 1052.4 L574.0 1052.2 L576.0 1052.1 L578.0 1051.9 L580.0 1051.6 L582.0 1051.3 L584.0 1051.0 L586.0 1050.7 L588.0 1050.3 L590.0 1049.9 L592.0 1049.4 L594.0 1048.8 L596.0 1048.2 L598.0 1047.6 L600.0 1046.9 L602.0 1046.1 L604.0 1045.3 L606.0 1044.4 L608.0 1043.5 L610.0 1042.5 L612.0 1041.4 L614.0 1040.4 L616.0 1039.2 L618.0 1038.0 L620.0 1036.8 L622.0 1035.5 L624.0 1034.2 L626.0 1032.9 L628.0 1031.5 L630.0 1030.1 L632.0 1028.7 L634.0 1027.3 L636.0 1025.8 L638.0 1024.4 L640.0 1022.9 L642.0 1021.4 L644.0 1019.9 L646.0 1018.4 L648.0 1016.9 L650.0 1015.4 L652.0 1013.8 L654.0 1012.3 L656.0 1010.8 L658.0 1009.2 L660.0 1007.7 L662.0 1006.1 L664.0 1004.5 L666.0 1002.9 L668.0 1001.3 L670.0 999.7 L672.0 998.0 L674.0 996.3 L676.0 994.6 L678.0 992.9 L680.0 991.1 L682.0 989.3 L684.0 987.4 L686.0 985.5 L688.0 983.6 L690.0 981.6 L692.0 979.6 L694.0 977.6 L696.0 975.5 L698.0 973.4 L700.0 971.2 L702.0 969.0 L704.0 966.8 L706.0 964.6 L708.0 962.4 L710.0 960.2 L712.0 957.9 L714.0 955.6 L716.0 953.4 L718.0 951.1 L720.0 948.9 L722.0 946.7 L724.0 944.4 L726.0 942.3 L728.0 940.1 L730.0 938.0 L732.0 935.9 L734.0 933.8 L736.0 931.8 L738.0 929.8 L740.0 927.9 L742.0 926.0 L744.0 924.1 L746.0 922.3 L748.0 920.5 L750.0 918.7 L752.0 917.0 L754.0 915.4 L756.0 913.7 L758.0 912.1 L760.0 910.5 L762.0 908.9 L764.0 907.4 L766.0 905.8 L768.0 904.3 L770.0 902.8 L772.0 901.3 L774.0 899.8 L776.0 898.3 L778.0 896.8 L780.0 895.3 L782.0 893.7 L784.0 892.2 L786.0 890.7 L788.0 889.2 L790.0 887.7 L792.0 886.1 L794.0 884.6 L796.0 883.1 L798.0 881.6 L800.0 880.0 L802.0 878.5 L804.0 877.0 L806.0 875.6 L808.0 874.1 L810.0 872.7 L812.0 871.3 L814.0 869.9 L816.0 868.6 L818.0 867.3 L820.0 866.1 L822.0 864.8 L824.0 863.7 L826.0 862.6 L828.0 861.5 L830.0 860.5 L832.0 859.6 L834.0 858.7 L836.0 857.9 L838.0 857.1 L840.0 856.4 L842.0 855.7 L844.0 855.1 L846.0 854.5 L848.0 854.0 L850.0 853.6 L852.0 853.2 L854.0 852.8 L856.0 852.5 L858.0 852.3 L860.0 852.0 L862.0 851.8 L864.0 851.7 L866.0 851.6 L868.0 851.5 L870.0 851.5 L872.0 851.5 L874.0 851.5 L876.0 851.5 L878.0 851.6 L880.0 851.7 L882.0 851.9 L884.0 852.1 L886.0 852.3 L888.0 852.5 L890.0 852.8 L892.0 853.1 L894.0 853.5 L896.0 853.9 L898.0 854.3 L900.0 854.8 L902.0 855.3 L904.0 855.9 L906.0 856.5 L908.0 857.1 L910.0 857.8 L912.0 858.5 L914.0 859.3 L916.0 860.1 L918.0 860.9 L920.0 861.8 L922.0 862.8 L924.0 863.7 L926.0 864.8 L928.0 865.8 L930.0 866.9 L932.0 868.0 L934.0 869.2 L936.0 870.3 L938.0 871.5 L940.0 872.8 L942.0 874.0 L944.0 875.3 L946.0 876.6 L948.0 877.9 L950.0 879.2 L952.0 880.6 L954.0 882.0 L956.0 883.4 L958.0 884.8 L960.0 886.2 L962.0 887.6 L964.0 889.1 L966.0 890.6 L968.0 892.1 L970.0 893.6 L972.0 895.1 L974.0 896.7 L976.0 898.3 L978.0 900.0 L980.0 901.6 L982.0 903.3 L984.0 905.0 L986.0 906.8 L988.0 908.6 L990.0 910.5 L992.0 912.3 L994.0 914.3 L996.0 916.2 L998.0 918.2 L1000.0 920.2 L1002.0 922.3 L1004.0 924.4 L1006.0 926.5 L1008.0 928.7 L1010.0 930.8 L1012.0 933.0 L1014.0 935.2 L1016.0 937.5 L1018.0 939.7 L1020.0 941.9 L1022.0 944.1 L1024.0 946.3 L1026.0 948.6 L1028.0 950.7 L1030.0 952.9 L1032.0 955.1 L1034.0 957.2 L1036.0 959.3 L1038.0 961.3 L1040.0 963.3 L1042.0 965.3 L1044.0 967.3 L1046.0 969.2 L1048.0 971.1 L1050.0 972.9 L1052.0 974.7 L1054.0 976.4 L1056.0 978.1 L1058.0 979.8 L1060.0 981.5 L1062.0 983.1 L1064.0 984.7 L1066.0 986.3 L1068.0 987.9 L1070.0 989.5 L1072.0 991.0 L1074.0 992.6 L1076.0 994.2 L1078.0 995.7 L1080.0 997.3 L1082.0 998.9 L1084.0 1000.5 L1086.0 1002.1 L1088.0 1003.7 L1090.0 1005.3 L1092.0 1007.0 L1094.0 1008.7 L1096.0 1010.4 L1098.0 1012.1 L1100.0 1013.8 L1102.0 1015.5 L1104.0 1017.2 L1106.0 1019.0 L1108.0 1020.7 L1110.0 1022.4 L1112.0 1024.1 L1114.0 1025.8 L1116.0 1027.5 L1118.0 1029.2 L1120.0 1030.8 L1122.0 1032.3 L1124.0 1033.9 L1126.0 1035.4 L1128.0 1036.8 L1130.0 1038.2 L1132.0 1039.5 L1134.0 1040.7 L1136.0 1041.9 L1138.0 1043.1 L1140.0 1044.1 L1142.0 1045.1 L1144.0 1046.0 L1146.0 1046.8 L1148.0 1047.6 L1150.0 1048.3 L1152.0 1049.0 L1154.0 1049.5 L1156.0 1050.1 L1158.0 1050.5 L1160.0 1050.9 L1162.0 1051.3 L1164.0 1051.6 L1166.0 1051.8 L1168.0 1052.1 L1170.0 1052.3 L1172.0 1052.4 L1174.0 1052.5 L1176.0 1052.6 L1178.0 1052.7 L1180.0 1052.8 L1182.0 1052.8 L1184.0 1052.8 L1186.0 1052.8 L1188.0 1052.8 L1190.0 1052.8 L1192.0 1052.7 L1194.0 1052.6 L1196.0 1052.5 L1198.0 1052.4 L1200.0 1052.3 L1202.0 1052.1 L1204.0 1051.9 L1206.0 1051.7 L1208.0 1051.5 L1210.0 1051.2 L1212.0 1050.8 L1214.0 1050.4 L1216.0 1050.0 L1218.0 1049.6 L1220.0 1049.0 L1222.0 1048.5 L1224.0 1047.8 L1226.0 1047.1 L1228.0 1046.4 L1230.0 1045.6 L1232.0 1044.7 L1234.0 1043.8 L1236.0 1042.9 L1238.0 1041.8 L1240.0 1040.8 L1242.0 1039.6 L1244.0 1038.5 L1246.0 1037.3 L1248.0 1036.0 L1250.0 1034.7 L1252.0 1033.4 L1254.0 1032.0 L1256.0 1030.7 L1258.0 1029.3 L1260.0 1027.8 L1262.0 1026.4 L1264.0 1024.9 L1266.0 1023.4 L1268.0 1022.0 L1270.0 1020.5 L1272.0 1019.0 L1274.0 1017.4 L1276.0 1015.9 L1278.0 1014.4 L1280.0 1012.9 L1282.0 1011.4 L1284.0 1009.8 L1286.0 1008.3 L1288.0 1006.7 L1290.0 1005.1 L1292.0 1003.5 L1294.0 1001.9 L1296.0 1000.3 L1298.0 998.6 L1300.0 997.0 L1302.0 995.3 L1304.0 993.5 L1306.0 991.7 L1308.0 989.9 L1310.0 988.1 L1312.0 986.2 L1314.0 984.3 L1316.0 982.3 L1318.0 980.4 L1320.0 978.3 L1322.0 976.3 L1324.0 974.2 L1326.0 972.0 L1328.0 969.9 L1330.0 967.7 L1332.0 965.5 L1334.0 963.2 L1336.0 961.0 L1338.0 958.7 L1340.0 956.5 L1342.0 954.2 L1344.0 952.0 L1346.0 949.7 L1348.0 947.5 L1350.0 945.3 L1352.0 943.1 L1354.0 940.9 L1356.0 938.8 L1358.0 936.7 L1360.0 934.6 L1362.0 932.5 L1364.0 930.5 L1366.0 928.6 L1368.0 926.7 L1370.0 924.8 L1372.0 923.0 L1374.0 921.2 L1376.0 919.4 L1378.0 917.7 L1380.0 916.0 L1382.0 914.3 L1384.0 912.7 L1386.0 911.1 L1388.0 909.5 L1390.0 908.0 L1392.0 906.4 L1394.0 904.9 L1396.0 903.4 L1398.0 901.9 L1400.0 900.3 L1402.0 898.8 L1404.0 897.3 L1406.0 895.8 L1408.0 894.3 L1410.0 892.8 L1412.0 891.3 L1414.0 889.8 L1416.0 888.2 L1418.0 886.7 L1420.0 885.2 L1422.0 883.6 L1424.0 882.1 L1426.0 880.6 L1428.0 879.1 L1430.0 877.6 L1432.0 876.1 L1434.0 874.7 L1436.0 873.2 L1438.0 871.8 L1440.0 870.4 L1442.0 869.1 L1444.0 867.8 L1446.0 866.5 L1448.0 865.3 L1450.0 864.1 L1452.0 863.0 L1454.0 861.9 L1456.0 860.9 L1458.0 859.9 L1460.0 859.0 L1462.0 858.2 L1464.0 857.4 L1466.0 856.6 L1468.0 856.0 L1470.0 855.3 L1472.0 854.7 L1474.0 854.2 L1476.0 853.8 L1478.0 853.3 L1480.0 853.0 L1482.0 852.6 L1484.0 852.4 L1486.0 852.1 L1488.0 851.9 L1490.0 851.8 L1492.0 851.6 L1494.0 851.5 L1496.0 851.5 L1498.0 851.5 L1500.0 851.5 L1502.0 851.5 L1504.0 851.6 L1506.0 851.7 L1508.0 851.8 L1510.0 852.0 L1512.0 852.2 L1514.0 852.4 L1516.0 852.7 L1518.0 853.0 L1520.0 853.4 L1522.0 853.7 L1524.0 854.2 L1526.0 854.6 L1528.0 855.1 L1530.0 855.7 L1532.0 856.2 L1534.0 856.9 L1536.0 857.5 L1538.0 858.2 L1540.0 859.0 L1542.0 859.8 L1544.0 860.6 L1546.0 861.5 L1548.0 862.4 L1550.0 863.4 L1552.0 864.4 L1554.0 865.4 L1556.0 866.5 L1558.0 867.6 L1560.0 868.7 L1562.0 869.9 L1564.0 871.1 L1566.0 872.3 L1568.0 873.6 L1570.0 874.8 L1572.0 876.1 L1574.0 877.4 L1576.0 878.7 L1578.0 880.1 L1580.0 881.5 L1582.0 882.8 L1584.0 884.2 L1586.0 885.6 L1588.0 887.1 L1590.0 888.5 L1592.0 890.0 L1594.0 891.5 L1596.0 893.0 L1598.0 894.6 L1600.0 896.1 L1602.0 897.7 L1604.0 899.3 L1606.0 901.0 L1608.0 902.7 L1610.0 904.4 L1612.0 906.2 L1614.0 907.9 L1616.0 909.8 L1618.0 911.6 L1620.0 913.5 L1622.0 915.5 L1624.0 917.5 L1626.0 919.5 L1628.0 921.5 L1630.0 923.6 L1632.0 925.7 L1634.0 927.9 L1636.0 930.0 L1638.0 932.2 L1640.0 934.4 L1642.0 936.6' fill='none' stroke='#e50000' stroke-width='2.6' stroke-linejoin='round'/><path d='M255.2 959.8 C257.6 958.3 263.8 953.7 269.4 950.7 C275.0 947.7 280.5 944.3 288.9 941.7 C297.3 939.1 311.6 937.5 320.0 935.2 C328.4 932.9 330.3 930.6 339.2 928.0 C348.1 925.4 363.9 922.1 373.2 919.4 C382.5 916.6 389.8 913.4 395.0 911.5 C400.2 909.6 401.5 909.0 404.3 908.2 C407.1 907.4 409.4 907.9 411.7 906.9 C414.0 905.9 416.2 904.2 418.1 902.2 C420.0 900.2 421.2 898.2 422.8 894.8 C424.4 891.4 425.9 886.8 427.4 881.9 C428.9 877.0 430.6 870.5 432.0 865.2 C433.4 860.0 434.5 854.3 435.7 850.4 C436.9 846.5 438.0 843.9 439.4 842.0 C440.8 840.1 442.6 839.4 444.1 839.3 C445.7 839.1 447.2 839.7 448.7 841.1 C450.2 842.5 451.8 844.8 453.3 847.6 C454.9 850.4 456.4 854.7 458.0 857.8 C459.6 860.9 460.8 863.2 462.6 866.1 C464.5 869.0 466.5 871.9 469.1 875.4 C471.7 878.9 475.2 883.7 478.3 887.4 C481.4 891.1 484.5 894.7 487.6 897.6 C490.7 900.5 493.8 903.0 496.9 905.0 C500.0 907.0 503.1 908.2 506.1 909.6 C509.1 911.0 510.4 911.3 515.0 913.3 C519.6 915.3 529.5 919.6 534.0 921.6 C538.5 923.6 537.6 923.2 542.2 925.0 C546.9 926.8 557.3 930.4 561.9 932.2 C566.5 934.0 565.9 933.8 570.0 935.6 C574.1 937.4 578.4 939.2 586.7 942.8 C595.0 946.4 608.1 953.3 620.0 957.2 C631.9 961.1 646.2 963.4 657.8 966.3 C669.4 969.2 682.7 973.0 689.7 974.8 C696.7 976.6 697.0 976.5 700.0 977.2 C703.0 977.9 704.3 978.6 707.4 978.9 C710.5 979.2 715.4 979.0 718.5 979.1 C721.6 979.2 723.9 978.7 725.9 979.8 C727.9 980.9 729.2 983.1 730.6 985.6 C732.0 988.1 733.1 990.9 734.3 994.8 C735.5 998.6 736.8 1004.2 738.0 1008.7 C739.2 1013.2 740.3 1017.4 741.7 1021.7 C743.1 1026.0 744.6 1031.4 746.3 1034.6 C748.0 1037.8 749.6 1039.5 751.9 1041.1 C754.2 1042.7 756.7 1043.7 760.2 1044.4 C763.7 1045.1 770.3 1045.5 773.1 1045.3 C775.9 1045.1 775.6 1044.9 776.9 1043.0 C778.1 1041.1 779.2 1037.6 780.6 1033.7 C782.0 1029.8 783.7 1024.4 785.2 1019.8 C786.7 1015.2 788.3 1009.8 789.8 1005.9 C791.3 1002.0 792.7 998.9 794.4 996.7 C796.1 994.5 798.0 993.6 800.0 992.5 C802.0 991.4 804.2 990.8 806.5 990.2 C808.8 989.6 811.6 989.3 813.9 988.8 C816.1 988.3 816.0 988.6 820.0 987.0 C824.0 985.4 831.2 982.7 838.0 979.0 C844.8 975.3 853.7 968.3 860.9 965.0 C868.1 961.7 874.5 961.4 881.3 959.4 C888.1 957.4 895.8 955.4 901.7 952.8 C907.6 950.2 912.2 946.3 916.9 943.6 C921.6 940.9 923.6 938.4 930.0 936.5 C936.4 934.6 945.6 934.7 955.1 932.2 C964.6 929.7 978.1 924.1 987.0 921.6 C995.9 919.1 1002.8 918.7 1008.3 917.3 C1013.8 915.9 1016.1 915.2 1020.0 913.2 C1023.9 911.2 1027.6 908.0 1031.6 905.0 C1035.6 902.0 1040.1 899.2 1044.1 895.4 C1048.1 891.5 1052.9 885.9 1055.6 881.9 C1058.3 877.9 1058.9 875.5 1060.5 871.3 C1062.1 867.1 1063.7 861.5 1065.3 856.8 C1066.9 852.1 1068.6 846.7 1070.1 843.3 C1071.5 839.9 1072.7 838.0 1074.0 836.6 C1075.3 835.2 1076.5 834.6 1077.8 834.7 C1079.1 834.8 1080.2 835.3 1081.7 837.1 C1083.2 838.9 1084.9 840.7 1086.5 845.3 C1088.1 849.9 1089.7 858.4 1091.3 864.5 C1092.9 870.6 1094.5 876.9 1096.1 881.9 C1097.7 886.9 1099.1 891.0 1100.9 894.4 C1102.7 897.8 1104.5 900.2 1106.7 902.1 C1109.0 904.0 1111.8 905.0 1114.4 906.0 C1117.0 907.0 1119.4 907.4 1122.1 908.4 C1124.8 909.4 1127.8 910.8 1130.8 912.2 C1133.8 913.6 1136.8 915.2 1140.0 916.6 C1143.2 918.0 1145.2 919.1 1150.1 920.5 C1155.0 921.9 1161.2 922.3 1169.2 925.0 C1177.2 927.7 1190.0 933.0 1198.3 936.7 C1206.6 940.5 1213.0 945.0 1219.2 947.5 C1225.5 950.0 1230.7 950.2 1235.8 951.7 C1240.9 953.2 1243.7 955.0 1250.0 956.7 C1256.3 958.4 1264.4 959.7 1273.7 962.0 C1283.0 964.3 1296.2 968.0 1305.6 970.5 C1315.0 973.0 1324.4 976.0 1330.0 977.2 C1335.6 978.4 1334.4 977.7 1339.3 977.7 C1344.2 977.7 1355.4 976.6 1359.6 977.0 C1363.8 977.4 1362.8 978.0 1364.3 980.0 C1365.8 982.0 1367.4 985.4 1368.9 989.3 C1370.4 993.1 1372.0 998.6 1373.5 1003.1 C1375.0 1007.6 1376.5 1012.5 1378.1 1016.1 C1379.6 1019.7 1380.0 1023.2 1382.8 1024.9 C1385.6 1026.6 1390.5 1025.9 1394.8 1026.1 C1399.1 1026.2 1405.6 1026.4 1408.7 1025.8 C1411.8 1025.2 1411.8 1024.4 1413.3 1022.6 C1414.8 1020.8 1416.5 1017.7 1418.0 1015.2 C1419.5 1012.7 1420.9 1010.4 1422.6 1007.8 C1424.3 1005.2 1425.8 1001.9 1428.1 999.4 C1430.4 996.9 1432.8 995.3 1436.5 993.0 C1440.2 990.7 1443.2 988.6 1450.0 985.6 C1456.8 982.6 1468.9 979.2 1477.3 974.9 C1485.7 970.6 1492.0 963.7 1500.5 960.0 C1509.0 956.3 1520.0 955.6 1528.2 952.6 C1536.5 949.6 1542.9 944.6 1550.0 941.7 C1557.1 938.9 1563.0 937.5 1571.0 935.5 C1579.0 933.5 1590.8 931.8 1597.9 930.0 C1605.0 928.2 1606.1 927.6 1613.6 924.8 C1621.1 922.0 1638.1 915.0 1643.0 913.1' fill='none' stroke='#6e6c6c' stroke-width='2.2' stroke-linejoin='round'/><path d='M255.2 948.8 C257.6 949.1 263.8 950.1 269.4 950.7 C275.0 951.3 282.1 952.0 288.9 952.3 C295.7 952.5 304.6 952.0 310.0 952.2 C315.4 952.4 318.5 953.3 321.1 953.7 C323.7 954.1 324.4 953.8 325.6 954.4 C326.8 955.0 327.5 955.8 328.3 957.2 C329.1 958.6 329.8 959.8 330.6 962.8 C331.4 965.8 332.3 970.2 333.3 975.0 C334.3 979.8 335.6 986.2 336.7 991.7 C337.8 997.2 338.9 1003.1 340.0 1008.3 C341.1 1013.5 342.2 1018.7 343.3 1022.8 C344.4 1026.9 345.7 1030.6 346.7 1032.8 C347.7 1035.0 348.3 1036.1 349.1 1036.1 C349.9 1036.1 350.7 1035.0 351.7 1032.8 C352.7 1030.6 353.8 1027.4 355.0 1022.8 C356.2 1018.2 357.7 1010.6 358.9 1005.0 C360.1 999.4 361.1 995.3 362.2 989.4 C363.3 983.5 364.6 975.1 365.6 969.4 C366.6 963.7 367.5 958.7 368.3 955.0 C369.1 951.3 369.8 949.0 370.6 947.2 C371.4 945.4 371.4 945.0 373.3 944.4 C375.2 943.8 377.8 944.0 382.2 943.9 C386.6 943.8 393.0 943.9 400.0 943.7 C407.0 943.5 415.0 942.7 424.4 942.9 C433.8 943.1 447.4 943.9 456.3 945.0 C465.2 946.1 471.9 948.5 477.6 949.7 C483.3 950.9 486.5 953.2 490.4 952.4 C494.3 951.6 497.1 947.8 501.0 945.0 C504.9 942.2 510.6 936.8 513.8 935.4 C517.0 934.0 517.5 935.8 520.0 936.7 C522.5 937.6 525.9 939.3 528.9 940.6 C531.9 941.9 534.6 944.1 537.8 944.4 C540.9 944.7 543.4 943.4 547.8 942.2 C552.2 941.0 558.8 938.5 564.4 937.2 C570.0 935.9 575.5 935.0 581.1 934.4 C586.7 933.8 591.3 933.4 597.8 933.3 C604.3 933.2 614.5 933.6 620.0 933.8 C625.5 934.0 628.6 935.2 631.1 934.7 C633.6 934.2 633.6 933.2 634.8 930.6 C636.0 928.0 637.1 924.6 638.5 919.4 C639.9 914.1 641.6 906.0 643.1 899.1 C644.6 892.2 646.4 883.2 647.8 877.8 C649.2 872.4 650.3 869.2 651.5 866.7 C652.7 864.2 654.0 863.2 655.2 863.0 C656.4 862.8 657.5 863.4 658.9 865.3 C660.3 867.1 662.0 870.2 663.5 874.1 C665.0 878.0 666.6 884.0 668.1 888.9 C669.6 893.8 671.2 899.4 672.8 903.7 C674.3 908.0 675.7 911.4 677.4 914.8 C679.1 918.2 681.0 921.0 683.0 924.1 C685.0 927.2 687.5 931.1 689.4 933.3 C691.2 935.5 692.1 936.3 694.1 937.5 C696.1 938.7 698.4 939.4 701.5 940.3 C704.6 941.1 709.5 942.1 712.6 942.6 C715.7 943.1 715.0 943.1 720.0 943.1 C725.0 943.1 732.0 943.1 742.9 942.4 C753.8 941.6 775.5 940.0 785.5 938.6 C795.5 937.2 798.5 935.7 802.6 934.3 C806.7 932.9 807.1 931.6 810.0 930.4 C812.9 929.2 817.2 927.3 820.2 927.3 C823.2 927.3 825.6 928.9 828.3 930.4 C831.0 931.9 833.8 934.5 836.5 936.5 C839.2 938.5 840.5 940.8 844.6 942.1 C848.7 943.5 854.8 943.7 860.9 944.6 C867.0 945.5 874.5 946.5 881.3 947.7 C888.1 948.9 894.9 950.8 901.7 951.7 C908.5 952.6 915.8 953.1 922.0 953.3 C928.2 953.4 935.4 952.4 938.9 952.6 C942.4 952.8 941.6 952.7 943.3 954.4 C945.0 956.1 946.8 959.0 948.9 962.8 C951.0 966.6 953.4 972.8 955.6 977.2 C957.8 981.6 960.2 985.3 962.2 989.4 C964.2 993.5 965.9 997.6 967.8 1001.7 C969.6 1005.8 971.4 1010.0 973.3 1013.9 C975.1 1017.8 977.1 1022.4 978.9 1025.0 C980.7 1027.6 982.4 1029.4 983.9 1029.4 C985.4 1029.4 986.4 1028.3 987.8 1025.0 C989.2 1021.7 990.7 1015.7 992.2 1009.4 C993.7 1003.1 995.4 994.2 996.7 987.2 C998.0 980.2 998.9 973.1 1000.0 967.2 C1001.1 961.3 1002.0 955.3 1003.3 951.7 C1004.6 948.1 1005.9 947.0 1007.8 945.6 C1009.6 944.2 1010.7 943.8 1014.4 943.3 C1018.1 942.8 1025.7 942.9 1030.0 942.8 C1034.3 942.7 1030.7 942.3 1040.0 942.8 C1049.3 943.3 1075.5 945.1 1086.0 946.0 C1096.5 946.9 1096.9 947.3 1103.3 948.2 C1109.7 949.1 1118.5 951.9 1124.6 951.4 C1130.7 950.9 1136.3 946.4 1140.0 945.0 C1143.7 943.6 1141.2 943.2 1146.7 942.9 C1152.2 942.5 1166.1 943.7 1173.3 942.9 C1180.5 942.1 1184.4 939.8 1190.0 938.3 C1195.6 936.8 1201.2 935.0 1206.7 934.2 C1212.2 933.4 1216.1 933.4 1223.3 933.3 C1230.5 933.2 1242.9 933.3 1250.0 933.5 C1257.1 933.7 1262.6 935.4 1266.0 934.6 C1269.4 933.8 1268.8 932.5 1270.2 928.7 C1271.6 924.9 1273.1 918.8 1274.5 911.7 C1275.9 904.6 1277.4 893.9 1278.8 886.1 C1280.2 878.3 1281.8 870.3 1283.0 864.8 C1284.2 859.3 1285.0 855.8 1286.2 853.1 C1287.4 850.4 1288.7 848.8 1289.9 848.8 C1291.2 848.8 1292.4 849.7 1293.7 853.1 C1295.0 856.5 1296.5 862.5 1297.9 869.1 C1299.3 875.7 1300.8 884.7 1302.2 892.5 C1303.6 900.3 1305.2 909.1 1306.4 915.9 C1307.6 922.6 1308.7 929.2 1309.6 933.0 C1310.5 936.8 1309.3 937.4 1311.8 938.8 C1314.3 940.2 1318.1 940.8 1324.5 941.5 C1330.9 942.2 1339.1 943.4 1350.0 943.1 C1360.9 942.8 1376.6 941.1 1390.0 939.7 C1403.4 938.3 1422.2 935.0 1430.4 934.8 C1438.6 934.6 1435.5 936.0 1439.0 938.6 C1442.5 941.2 1448.2 949.0 1451.7 950.4 C1455.2 951.8 1456.8 948.4 1460.0 947.2 C1463.2 946.0 1467.0 944.0 1470.6 943.0 C1474.1 942.0 1476.8 941.1 1481.3 941.4 C1485.8 941.7 1492.0 943.5 1497.3 944.6 C1502.6 945.8 1507.0 947.1 1513.2 948.3 C1519.4 949.4 1528.4 951.2 1534.5 951.5 C1540.6 951.8 1543.9 950.4 1550.0 950.2 C1556.1 950.0 1567.2 949.8 1571.3 950.2 C1575.4 950.7 1573.4 951.1 1574.5 952.9 C1575.6 954.7 1576.5 956.9 1577.7 960.9 C1579.0 964.9 1580.6 971.4 1582.0 976.9 C1583.4 982.4 1584.8 988.2 1586.2 993.9 C1587.6 999.6 1589.0 1006.4 1590.5 1010.9 C1592.0 1015.4 1593.7 1020.0 1595.3 1021.1 C1596.9 1022.2 1598.4 1020.2 1600.1 1017.3 C1601.8 1014.4 1603.6 1008.5 1605.4 1003.5 C1607.2 998.5 1608.9 992.5 1610.7 987.5 C1612.5 982.5 1614.0 977.8 1616.0 973.7 C1618.0 969.6 1620.1 966.2 1622.4 963.0 C1624.7 959.8 1627.4 957.0 1629.9 954.5 C1632.4 952.0 1635.1 949.8 1637.3 948.1 C1639.5 946.4 1642.0 944.9 1643.0 944.2' fill='none' stroke='#f6f3a8' stroke-width='2.2' stroke-linejoin='round'/><path d='M255.2 882.7 C255.8 885.4 257.8 894.0 259.1 898.9 C260.4 903.8 261.7 907.8 263.0 911.9 C264.3 916.0 265.6 919.8 266.9 923.5 C268.2 927.2 269.4 930.9 270.7 933.9 C272.0 936.9 273.3 939.5 274.6 941.7 C275.9 943.9 276.6 945.5 278.5 946.9 C280.4 948.3 283.5 949.3 286.3 950.1 C289.1 950.9 289.8 951.4 295.4 951.8 C301.0 952.2 312.7 952.6 320.0 952.7 C327.3 952.8 326.8 952.1 339.2 952.4 C351.6 952.7 376.8 954.5 394.5 954.6 C412.2 954.7 430.1 953.1 445.7 953.1 C461.3 953.1 477.6 954.7 488.2 954.6 C498.8 954.5 504.2 953.0 509.5 952.4 C514.8 951.8 516.8 951.5 520.0 951.1 C523.2 950.7 526.1 950.2 528.9 950.0 C531.7 949.8 534.8 949.2 536.7 949.7 C538.7 950.2 539.4 950.6 540.6 952.8 C541.8 955.0 542.8 958.5 543.9 962.8 C545.0 967.0 546.1 972.8 547.2 978.3 C548.3 983.8 549.5 990.2 550.6 996.1 C551.7 1002.0 552.8 1008.5 553.9 1013.9 C555.0 1019.3 556.1 1024.5 557.2 1028.3 C558.3 1032.1 559.4 1036.1 560.6 1036.7 C561.8 1037.3 563.2 1035.0 564.4 1031.7 C565.6 1028.5 566.6 1023.3 567.8 1017.2 C569.0 1011.1 570.4 1002.4 571.7 995.0 C573.0 987.6 574.3 979.6 575.6 972.8 C576.9 965.9 578.1 958.7 579.4 953.9 C580.7 949.1 581.7 945.8 583.3 943.9 C584.9 942.0 585.6 942.8 588.9 942.2 C592.2 941.7 598.1 941.2 603.3 940.6 C608.5 940.0 612.6 939.3 620.0 938.9 C627.4 938.5 631.1 938.7 647.8 938.4 C664.5 938.1 704.1 937.0 720.0 937.0 C735.9 937.0 727.9 938.7 742.9 938.6 C757.9 938.5 796.3 936.6 810.0 936.5 C823.7 936.4 819.9 937.2 825.3 938.0 C830.7 938.8 839.0 941.2 842.6 941.0 C846.2 940.8 845.4 939.8 846.7 936.5 C848.1 933.2 849.4 926.6 850.7 921.2 C852.1 915.8 853.4 909.9 854.8 903.9 C856.2 897.9 857.5 890.6 858.9 885.5 C860.3 880.4 861.7 875.8 863.0 873.3 C864.3 870.8 865.3 870.3 866.5 870.3 C867.7 870.3 868.8 871.1 870.1 873.3 C871.4 875.5 872.7 878.4 874.2 883.5 C875.7 888.6 877.7 897.8 879.2 903.9 C880.7 910.0 881.8 915.1 883.3 920.2 C884.8 925.3 886.5 930.7 888.4 934.4 C890.3 938.1 892.3 940.6 894.5 942.6 C896.7 944.6 898.8 945.5 901.7 946.6 C904.6 947.7 907.1 948.3 911.8 949.2 C916.5 950.1 919.6 951.5 930.0 952.2 C940.4 952.9 961.4 952.9 974.4 953.3 C987.4 953.7 996.9 954.8 1007.8 954.8 C1018.7 954.8 1027.0 953.3 1040.0 953.3 C1053.0 953.3 1071.9 954.4 1086.0 954.6 C1100.1 954.8 1115.6 955.0 1124.6 954.6 C1133.6 954.2 1134.7 952.6 1140.0 952.1 C1145.3 951.6 1152.5 951.1 1156.7 951.7 C1160.9 952.3 1162.2 953.7 1165.0 955.8 C1167.8 957.9 1170.8 961.0 1173.3 964.2 C1175.8 967.4 1177.9 971.0 1180.0 975.0 C1182.1 979.0 1184.0 984.3 1185.8 988.3 C1187.6 992.3 1189.3 996.5 1190.8 999.2 C1192.3 1001.9 1193.6 1004.2 1195.0 1004.6 C1196.4 1005.0 1197.8 1003.9 1199.2 1001.7 C1200.6 999.6 1201.9 995.9 1203.3 991.7 C1204.7 987.5 1206.1 982.0 1207.5 976.7 C1208.9 971.4 1210.3 964.7 1211.7 960.0 C1213.1 955.3 1214.1 951.1 1215.8 948.3 C1217.5 945.5 1219.0 944.6 1221.7 943.3 C1224.4 942.0 1227.0 940.9 1231.7 940.4 C1236.4 939.9 1240.7 940.4 1250.0 940.0 C1259.3 939.6 1276.6 938.2 1287.3 938.1 C1298.0 938.0 1303.5 939.5 1313.9 939.4 C1324.4 939.3 1335.5 938.1 1350.0 937.8 C1364.5 937.5 1386.8 937.6 1400.6 937.6 C1414.4 937.6 1422.7 937.2 1432.6 937.6 C1442.5 938.0 1453.7 939.2 1460.0 939.8 C1466.3 940.4 1467.5 941.0 1470.6 941.4 C1473.7 941.8 1476.6 942.9 1478.6 941.9 C1480.6 940.9 1481.1 939.6 1482.4 935.5 C1483.7 931.4 1485.2 924.5 1486.6 917.4 C1488.0 910.3 1489.5 900.5 1490.9 892.9 C1492.3 885.3 1493.9 877.3 1495.1 871.6 C1496.3 865.9 1497.2 861.5 1498.3 858.8 C1499.4 856.0 1500.4 855.1 1501.5 855.1 C1502.6 855.1 1503.5 855.1 1504.7 858.8 C1506.0 862.4 1507.6 870.1 1509.0 877.0 C1510.4 883.9 1511.8 892.6 1513.2 900.4 C1514.6 908.2 1516.2 917.1 1517.5 923.8 C1518.8 930.5 1520.0 936.9 1521.2 940.8 C1522.5 944.7 1522.8 945.8 1525.0 947.2 C1527.2 948.6 1528.7 948.6 1534.5 949.4 C1540.3 950.2 1550.3 951.4 1560.0 952.0 C1569.7 952.6 1578.8 952.6 1592.6 952.9 C1606.4 953.2 1634.6 953.8 1643.0 954.0' fill='none' stroke='#f26a6a' stroke-width='2.2' stroke-linejoin='round'/></g></svg>
</body></html>
